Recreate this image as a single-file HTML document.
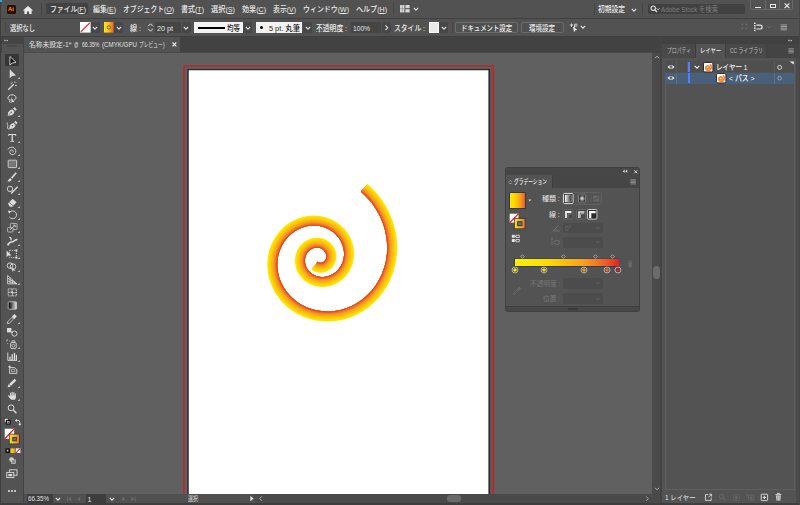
<!DOCTYPE html>
<html lang="ja"><head><meta charset="utf-8"><title>Illustrator</title>
<style>
html,body{margin:0;padding:0;background:#535353;}
body{width:800px;height:505px;position:relative;overflow:hidden;font-family:"Liberation Sans","Noto Sans CJK JP",sans-serif;}
body>div,body>span,body>svg{position:absolute;}
.t{white-space:nowrap;display:inline-block;transform-origin:0 50%;}
u{text-decoration:underline;text-underline-offset:0.5px;text-decoration-thickness:0.5px;}
</style></head><body>
<div style="left:0px;top:0px;width:800px;height:505px;background:#535353;"></div>
<div style="left:0px;top:0px;width:800px;height:18px;background:#525252;"></div>
<div style="left:0px;top:18px;width:800px;height:1px;background:#404040;"></div>
<div style="left:0px;top:19px;width:800px;height:17px;background:#525252;"></div>
<div style="left:0px;top:36px;width:800px;height:1px;background:#404040;"></div>
<div style="left:0px;top:37px;width:800px;height:16px;background:#424242;"></div>
<div style="left:24px;top:52.6px;width:628px;height:441.4px;background:#606060;"></div>
<div style="left:7px;top:5px;width:8.6px;height:8.6px;background:#2d0d00;border-radius:1.5px;"></div>
<span class="t" style="left:8.1px;top:5.4px;font-size:6px;line-height:8px;color:#ff9a00;font-weight:bold;letter-spacing:-0.3px;">Ai</span>
<svg style="left:22px;top:4.6px;" width="12" height="10" viewBox="0 0 12 10"><path d="M6 1L0.8 5.4H2.4V9H4.9V6.4H7.1V9H9.6V5.4H11.2Z" fill="#ececec"/></svg>
<div style="left:41px;top:3px;width:1px;height:12px;background:#454545;"></div>
<div style="left:46px;top:3px;width:42px;height:11px;background:#424242;border-radius:1.5px;"></div>
<span class="t m" style="transform:scaleX(0.898);left:50px;top:3.8px;font-size:7.6px;line-height:11px;color:#ececec;font-weight:500;">ファイル(<u>F</u>)</span>
<span class="t m" style="transform:scaleX(0.908);left:93px;top:3.8px;font-size:7.6px;line-height:11px;color:#ececec;font-weight:500;">編集(<u>E</u>)</span>
<span class="t m" style="transform:scaleX(0.902);left:123px;top:3.8px;font-size:7.6px;line-height:11px;color:#ececec;font-weight:500;">オブジェクト(<u>O</u>)</span>
<span class="t m" style="transform:scaleX(0.924);left:181px;top:3.8px;font-size:7.6px;line-height:11px;color:#ececec;font-weight:500;">書式(<u>T</u>)</span>
<span class="t m" style="transform:scaleX(0.948);left:211px;top:3.8px;font-size:7.6px;line-height:11px;color:#ececec;font-weight:500;">選択(<u>S</u>)</span>
<span class="t m" style="transform:scaleX(0.933);left:242px;top:3.8px;font-size:7.6px;line-height:11px;color:#ececec;font-weight:500;">効果(<u>C</u>)</span>
<span class="t m" style="transform:scaleX(0.908);left:273px;top:3.8px;font-size:7.6px;line-height:11px;color:#ececec;font-weight:500;">表示(<u>V</u>)</span>
<span class="t m" style="transform:scaleX(0.916);left:303px;top:3.8px;font-size:7.6px;line-height:11px;color:#ececec;font-weight:500;">ウィンドウ(<u>W</u>)</span>
<span class="t m" style="transform:scaleX(0.930);left:356px;top:3.8px;font-size:7.6px;line-height:11px;color:#ececec;font-weight:500;">ヘルプ(<u>H</u>)</span>
<div style="left:393px;top:3px;width:1px;height:12px;background:#454545;"></div>
<div style="left:593.5px;top:3px;width:1px;height:12px;background:#454545;"></div>
<svg style="left:400px;top:5px;" width="10" height="8" viewBox="0 0 10 8"><rect x="0" y="0" width="4.4" height="7.4" fill="#d8d8d8"/><rect x="5.4" y="0" width="4.2" height="3.2" fill="#d8d8d8"/><rect x="5.4" y="4.2" width="4.2" height="3.2" fill="#d8d8d8"/><path d="M0 3.7H4.4M2.2 0V7.4" stroke="#777" stroke-width="0.5"/></svg>
<svg style="left:411.5px;top:5.800000000000001px;" width="8" height="6" viewBox="0 0 8 6"><path d="M1.7999999999999998 1.9L4 4.1L6.2 1.9" fill="none" stroke="#e0e0e0" stroke-width="1.1"/></svg>
<span class="t m" style="transform:scaleX(0.889);left:598px;top:3.8px;font-size:7.6px;line-height:11px;color:#ececec;font-weight:500;">初期設定</span>
<svg style="left:629.5px;top:6.5px;" width="8" height="6" viewBox="0 0 8 6"><path d="M1.7999999999999998 1.9L4 4.1L6.2 1.9" fill="none" stroke="#e0e0e0" stroke-width="1.1"/></svg>
<div style="left:642px;top:3px;width:1px;height:12px;background:#454545;"></div>
<div style="left:648px;top:4px;width:97px;height:10px;background:#414141;border-radius:2px;"></div>
<svg style="left:650px;top:5px;" width="9" height="9" viewBox="0 0 9 9"><circle cx="3.2" cy="3.2" r="2.2" fill="none" stroke="#ddd" stroke-width="1.1"/><path d="M4.8 4.8L7 7" stroke="#ddd" stroke-width="1.3"/></svg>
<svg style="left:653.5px;top:5.800000000000001px;" width="8" height="6" viewBox="0 0 8 6"><path d="M2.5 2.25L4 3.75L5.5 2.25" fill="none" stroke="#ddd" stroke-width="0.9"/></svg>
<span class="t m" style="transform:scaleX(0.839);left:661px;top:3.5px;font-size:7.6px;line-height:11px;color:#7d7d7d;">Adobe Stock を検索</span>
<div style="left:750px;top:-2px;width:43px;height:12px;border:1px solid #686868;border-radius:2px;box-sizing:border-box;"></div>
<div style="left:765px;top:0px;width:1px;height:9px;background:#686868;"></div>
<div style="left:779px;top:0px;width:1px;height:9px;background:#686868;"></div>
<div style="left:755px;top:6.5px;width:6px;height:1.4px;background:#e8e8e8;"></div>
<div style="left:770px;top:3.5px;width:6px;height:4.5px;border:1.2px solid #e8e8e8;box-sizing:border-box;"></div>
<svg style="left:783px;top:2px;" width="8" height="8" viewBox="0 0 8 8"><path d="M1.6 1.4L6.4 6.2M6.4 1.4L1.6 6.2" stroke="#e8e8e8" stroke-width="1.2"/></svg>
<div style="left:5px;top:22px;width:1px;height:11px;background:#454545;"></div>
<span class="t m" style="transform:scaleX(0.823);left:10px;top:22.7px;font-size:7.6px;line-height:11px;color:#ececec;font-weight:500;">選択なし</span>
<svg style="left:80px;top:22px;" width="11" height="11" viewBox="0 0 11 11"><rect x="0" y="0" width="10.6" height="10.6" fill="#fff"/><path d="M0.8 9.8L9.8 0.8" stroke="#ee1c1c" stroke-width="1.2"/></svg>
<div style="left:91px;top:22px;width:9px;height:11px;background:#474747;border-radius:0 1.5px 1.5px 0;"></div>
<svg style="left:91.3px;top:24.5px;" width="8" height="6" viewBox="0 0 8 6"><path d="M1.7999999999999998 1.9L4 4.1L6.2 1.9" fill="none" stroke="#e0e0e0" stroke-width="1.1"/></svg>
<svg style="left:104px;top:22px;" width="11" height="11" viewBox="0 0 11 11"><defs><linearGradient id="g1" x1="0" x2="1" y1="0" y2="0"><stop offset="0" stop-color="#ffe900"/><stop offset="0.45" stop-color="#fdc70c"/><stop offset="1" stop-color="#ee5b2a"/></linearGradient></defs><rect x="0" y="0" width="9.6" height="10.6" fill="url(#g1)"/><circle cx="4.8" cy="5.3" r="1.7" fill="#f7b733" stroke="#3b5a9a" stroke-width="0.8"/></svg>
<div style="left:114px;top:22px;width:9px;height:11px;background:#474747;border-radius:0 1.5px 1.5px 0;"></div>
<svg style="left:114.8px;top:24.5px;" width="8" height="6" viewBox="0 0 8 6"><path d="M1.7999999999999998 1.9L4 4.1L6.2 1.9" fill="none" stroke="#e0e0e0" stroke-width="1.1"/></svg>
<span class="t m" style="transform:scaleX(0.930);left:130px;top:22.7px;font-size:7.6px;line-height:11px;color:#ececec;font-weight:500;">線 :</span>
<svg style="left:147px;top:22px;" width="7" height="11" viewBox="0 0 7 11"><path d="M1.2 4.2L3.5 1.8L5.8 4.2M1.2 6.8L3.5 9.2L5.8 6.8" fill="none" stroke="#e0e0e0" stroke-width="1"/></svg>
<div style="left:155px;top:22px;width:26.4px;height:11px;background:#454545;border-radius:1.5px 0 0 1.5px;"></div>
<span class="t m" style="transform:scaleX(0.947);left:157px;top:22.7px;font-size:7.6px;line-height:11px;color:#e6e6e6;font-weight:500;">20 pt</span>
<div style="left:182px;top:22px;width:9px;height:11px;background:#474747;border-radius:0 1.5px 1.5px 0;"></div>
<svg style="left:182.3px;top:24.5px;" width="8" height="6" viewBox="0 0 8 6"><path d="M1.7999999999999998 1.9L4 4.1L6.2 1.9" fill="none" stroke="#e0e0e0" stroke-width="1.1"/></svg>
<div style="left:194px;top:22px;width:49px;height:11px;background:#f2f2f2;"></div>
<div style="left:198px;top:27px;width:27px;height:1.6px;background:#000;"></div>
<span class="t m" style="transform:scaleX(0.856);left:227px;top:22.7px;font-size:7.6px;line-height:11px;color:#222;font-weight:500;">均等</span>
<div style="left:243px;top:22px;width:9px;height:11px;background:#474747;border-radius:0 1.5px 1.5px 0;"></div>
<svg style="left:243.8px;top:24.5px;" width="8" height="6" viewBox="0 0 8 6"><path d="M1.7999999999999998 1.9L4 4.1L6.2 1.9" fill="none" stroke="#e0e0e0" stroke-width="1.1"/></svg>
<div style="left:256px;top:22px;width:46px;height:11px;background:#f2f2f2;"></div>
<div style="left:259.6px;top:26px;width:3px;height:3px;background:#000;border-radius:50%;"></div>
<span class="t m" style="transform:scaleX(0.966);left:269px;top:22.7px;font-size:7.6px;line-height:11px;color:#222;font-weight:500;">5 pt. 丸筆</span>
<div style="left:303px;top:22px;width:9px;height:11px;background:#474747;border-radius:0 1.5px 1.5px 0;"></div>
<svg style="left:303.8px;top:24.5px;" width="8" height="6" viewBox="0 0 8 6"><path d="M1.7999999999999998 1.9L4 4.1L6.2 1.9" fill="none" stroke="#e0e0e0" stroke-width="1.1"/></svg>
<span class="t m" style="transform:scaleX(0.896);left:316px;top:22.7px;font-size:7.6px;line-height:11px;color:#ececec;font-weight:500;"><span style="text-decoration:underline dotted #a0a0a0;text-decoration-thickness:0.6px;text-underline-offset:0.4px">不透明度</span> :</span>
<div style="left:350.6px;top:22px;width:30.8px;height:11px;background:#454545;border-radius:1.5px 0 0 1.5px;"></div>
<span class="t m" style="transform:scaleX(0.875);left:353px;top:22.7px;font-size:7.6px;line-height:11px;color:#e6e6e6;font-weight:500;">100%</span>
<div style="left:382px;top:22px;width:9px;height:11px;background:#474747;border-radius:0 1.5px 1.5px 0;"></div>
<svg style="left:383px;top:24px;" width="7" height="8" viewBox="0 0 7 8"><path d="M2.4 1.4L4.8 3.8L2.4 6.2" fill="none" stroke="#e0e0e0" stroke-width="1.1"/></svg>
<span class="t m" style="transform:scaleX(0.896);left:394px;top:22.7px;font-size:7.6px;line-height:11px;color:#ececec;font-weight:500;">スタイル :</span>
<div style="left:429px;top:22px;width:10px;height:11px;background:#e9e9e9;border:0.6px solid #fff;box-sizing:border-box;"></div>
<div style="left:439px;top:22px;width:9px;height:11px;background:#474747;border-radius:0 1.5px 1.5px 0;"></div>
<svg style="left:439.8px;top:24.5px;" width="8" height="6" viewBox="0 0 8 6"><path d="M1.7999999999999998 1.9L4 4.1L6.2 1.9" fill="none" stroke="#e0e0e0" stroke-width="1.1"/></svg>
<div style="left:452px;top:22px;width:1px;height:11px;background:#454545;"></div>
<div style="left:455px;top:22px;width:63px;height:11px;border:1px solid #6c6c6c;border-radius:2px;box-sizing:border-box;background:#505050;"></div>
<span class="t m" style="transform:scaleX(0.840);left:461px;top:22.7px;font-size:7.6px;line-height:11px;color:#f0f0f0;font-weight:500;">ドキュメント設定</span>
<div style="left:521px;top:22px;width:43px;height:11px;border:1px solid #6c6c6c;border-radius:2px;box-sizing:border-box;background:#505050;"></div>
<span class="t m" style="transform:scaleX(0.856);left:529px;top:22.7px;font-size:7.6px;line-height:11px;color:#f0f0f0;font-weight:500;">環境設定</span>
<svg style="left:569px;top:22px;" width="10" height="11" viewBox="0 0 10 11"><path d="M1 3H4M2.5 1.5V5M5.5 2.2H8.5M5.5 4H8.5M5.5 2.2V8.8" stroke="#ddd" stroke-width="0.9" fill="none"/><path d="M4 4.5L8.5 8L6.3 8.2L5 10.2Z" fill="#e8e8e8"/></svg>
<svg style="left:579.2px;top:24px;" width="8" height="6" viewBox="0 0 8 6"><path d="M1.7999999999999998 1.9L4 4.1L6.2 1.9" fill="none" stroke="#e0e0e0" stroke-width="1.1"/></svg>
<svg style="left:741px;top:23px;" width="8" height="8" viewBox="0 0 8 8"><g fill="#6e6e6e"><rect x="0.6" y="0.6" width="1.6" height="1.6"/><rect x="4.6" y="0.6" width="1.6" height="1.6"/><rect x="0.6" y="4.6" width="1.6" height="1.6"/><rect x="4.6" y="4.6" width="1.6" height="1.6"/></g></svg>
<svg style="left:753px;top:22px;" width="12" height="11" viewBox="0 0 12 11"><g fill="#e6e6e6"><rect x="1" y="0.6" width="1.6" height="1.4"/><rect x="1" y="3" width="1.6" height="1.4"/><rect x="1" y="5.4" width="1.6" height="1.4"/><rect x="1" y="7.8" width="1.6" height="1.4"/></g><path d="M3.4 3.2H7.2A1.9 1.9 0 0 1 7.2 7H3.4" fill="none" stroke="#e6e6e6" stroke-width="1.2"/></svg>
<svg style="left:764.7px;top:24px;" width="8" height="6" viewBox="0 0 8 6"><path d="M2.2 2.1L4 3.9L5.8 2.1" fill="none" stroke="#777" stroke-width="0.8"/></svg>
<svg style="left:780px;top:24px;" width="8" height="7" viewBox="0 0 8 7"><g fill="#9a9a9a"><rect x="0.6" y="0.4" width="6.4" height="1.1"/><rect x="0.6" y="2" width="6.4" height="1.1"/><rect x="0.6" y="3.6" width="6.4" height="1.1"/><rect x="0.6" y="5.2" width="6.4" height="1.1"/></g></svg>
<div style="left:2px;top:37px;width:22px;height:6.5px;background:#454545;"></div>
<svg style="left:4.2px;top:38.6px;" width="6" height="4" viewBox="0 0 6 4"><path d="M0.5 0.5L1.9 1.5L0.5 2.5ZM2.7 0.5L4.1 1.5L2.7 2.5Z" fill="#e8e8e8"/></svg>
<div style="left:2px;top:43.5px;width:21.5px;height:460px;background:#535353;"></div>
<div style="left:6.6px;top:45.2px;width:10.4px;height:1.6px;background:#474747;"></div>
<div style="left:22.8px;top:37px;width:1.7px;height:467px;background:#444444;"></div>
<div style="left:24.4px;top:37px;width:156px;height:14.6px;background:#535353;"></div>
<div style="left:24.4px;top:51.6px;width:628px;height:1px;background:#4a4a4a;"></div>
<span class="t m" style="transform:scaleX(1.024);left:28.6px;top:38.6px;font-size:6.6px;line-height:11px;color:#e0e0e0;">名称未設定-1*</span>
<span class="t m" style="transform:scaleX(0.656);left:74.2px;top:38.6px;font-size:6.6px;line-height:11px;color:#e0e0e0;">@</span>
<span class="t m" style="transform:scaleX(0.778);left:81.6px;top:38.6px;font-size:6.6px;line-height:11px;color:#e0e0e0;">66.35%</span>
<span class="t m" style="transform:scaleX(0.936);left:101.8px;top:38.6px;font-size:6.6px;line-height:11px;color:#e0e0e0;">(CMYK/GPU</span>
<span class="t m" style="transform:scaleX(0.725);left:139px;top:38.6px;font-size:6.6px;line-height:11px;color:#e0e0e0;">プレビュー)</span>
<svg style="left:171px;top:41px;" width="7" height="7" viewBox="0 0 7 7"><path d="M1.5 1.5L5.3 5.3M5.3 1.5L1.5 5.3" stroke="#e8e8e8" stroke-width="1.2"/></svg>
<svg style="left:0;top:0;" width="800" height="505" viewBox="0 0 800 505"><rect x="183" y="65.15" width="311.1" height="1.7" fill="#ad2f2f"/><rect x="183" y="65.15" width="2" height="429" fill="#ad2f2f"/><rect x="491.9" y="65.15" width="2.2" height="429" fill="#ad2f2f"/><rect x="187.25" y="68.9" width="302.9" height="426" fill="#2b2b2b"/><rect x="188.75" y="70.25" width="299.65" height="425" fill="#ffffff"/></svg>
<svg style="left:0;top:0;" width="800" height="505" viewBox="0 0 800 505"><polygon points="311.29,269.58 312.49,270.45 313.78,271.20 315.15,271.82 316.60,272.30 318.10,272.62 319.65,272.79 321.21,272.80 322.79,272.64 324.36,272.31 325.90,271.82 327.39,271.17 328.82,270.35 330.17,269.38 331.43,268.26 332.58,267.00 333.59,265.62 334.47,264.12 335.19,262.52 335.75,260.84 336.14,259.09 336.34,257.29 336.35,255.46 336.17,253.62 335.80,251.79 335.23,249.99 334.46,248.24 333.51,246.57 332.38,244.98 331.07,243.50 329.60,242.15 327.98,240.96 326.22,239.92 324.35,239.07 322.37,238.40 320.32,237.95 318.20,237.70 316.04,237.68 313.87,237.89 311.71,238.32 309.59,238.99 307.52,239.89 305.53,241.01 303.65,242.34 301.90,243.89 300.30,245.62 298.87,247.54 297.64,249.62 296.62,251.84 295.83,254.18 295.28,256.62 294.98,259.14 294.95,261.70 295.19,264.28 295.70,266.86 296.49,269.39 297.55,271.86 298.88,274.24 300.46,276.48 302.30,278.58 304.37,280.50 306.65,282.21 309.14,283.69 311.79,284.91 314.59,285.87 317.51,286.53 320.53,286.90 323.60,286.94 326.69,286.67 329.78,286.06 332.83,285.12 335.80,283.86 338.66,282.27 341.36,280.37 343.89,278.16 346.20,275.68 348.27,272.94 350.06,269.95 351.55,266.76 352.71,263.38 353.52,259.86 353.97,256.23 354.03,252.52 353.71,248.78 352.99,245.05 351.86,241.36 350.34,237.77 348.43,234.31 346.14,231.02 343.48,227.96 340.48,225.15 337.16,222.64 333.55,220.46 329.68,218.64 325.59,217.22 321.32,216.22 316.91,215.67 312.41,215.58 307.87,215.96 303.32,216.83 298.84,218.18 294.47,220.02 290.25,222.33 286.25,225.11 282.51,228.34 279.08,231.98 276.01,236.02 273.34,240.41 271.11,245.12 269.37,250.10 268.14,255.31 267.45,260.69 267.32,266.18 267.77,271.73 268.81,277.28 270.45,282.76 272.68,288.11 275.50,293.27 278.88,298.18 282.82,302.77 287.26,306.97 292.19,310.74 297.56,314.03 303.32,316.77 309.42,318.92 315.79,320.44 322.38,321.31 329.11,321.48 335.92,320.95 342.73,319.69 349.46,317.69 356.04,314.97 362.38,311.53 368.41,307.39 374.05,302.58 379.24,297.13 383.89,291.09 387.94,284.51 391.32,277.44 393.99,269.95 395.89,262.12 396.97,254.02 397.21,245.73 396.57,237.35 395.04,228.97 392.61,220.68 389.28,212.57 385.07,204.75 379.99,197.31 374.08,190.34 367.39,183.93 360.86,191.51 366.80,197.19 372.04,203.37 376.53,209.95 380.24,216.85 383.18,223.99 385.31,231.28 386.65,238.63 387.21,245.97 387.01,253.21 386.06,260.27 384.41,267.09 382.09,273.59 379.16,279.72 375.65,285.41 371.64,290.63 367.18,295.32 362.33,299.46 357.16,303.00 351.74,305.94 346.13,308.27 340.40,309.96 334.62,311.03 328.85,311.49 323.16,311.34 317.61,310.61 312.25,309.33 307.14,307.52 302.32,305.23 297.85,302.50 293.75,299.36 290.06,295.87 286.81,292.08 284.02,288.03 281.70,283.79 279.87,279.40 278.53,274.92 277.68,270.40 277.31,265.89 277.42,261.44 277.97,257.10 278.97,252.91 280.36,248.91 282.14,245.15 284.27,241.65 286.71,238.44 289.42,235.56 292.37,233.02 295.51,230.84 298.81,229.02 302.23,227.59 305.71,226.54 309.22,225.87 312.73,225.57 316.18,225.64 319.56,226.07 322.81,226.83 325.91,227.90 328.83,229.28 331.55,230.92 334.04,232.80 336.27,234.89 338.25,237.17 339.94,239.59 341.35,242.14 342.46,244.77 343.28,247.46 343.80,250.16 344.04,252.86 343.99,255.53 343.67,258.12 343.10,260.63 342.27,263.01 341.23,265.26 339.97,267.35 338.54,269.26 336.94,270.98 335.20,272.49 333.35,273.79 331.40,274.87 329.40,275.73 327.35,276.36 325.28,276.77 323.23,276.95 321.20,276.92 319.23,276.68 317.32,276.25 315.51,275.63 313.80,274.84 312.22,273.90 310.77,272.81 309.47,271.61 308.32,270.30 307.34,268.90 306.52,267.44 305.87,265.93 305.39,264.39 305.08,262.85 304.94,261.30 304.96,259.79 305.13,258.31 305.45,256.89 305.91,255.53 306.49,254.26 307.19,253.08 308.00,252.00 308.89,251.04 309.85,250.18 310.88,249.45 311.96,248.85 313.07,248.36 314.20,248.01 315.34,247.78 316.47,247.67 317.58,247.68 318.66,247.81 319.69,248.04 320.68,248.37 321.60,248.79 322.46,249.29 323.24,249.87 323.94,250.51 324.55,251.21 325.08,251.94 325.52,252.71 325.86,253.51 326.12,254.31 326.28,255.12 326.36,255.92 326.36,256.70 326.27,257.46 326.11,258.19 325.88,258.88 325.59,259.52 325.24,260.12 324.84,260.66 324.40,261.15 323.93,261.57 323.42,261.93 322.90,262.23 322.36,262.47 321.82,262.64 321.27,262.76 320.74,262.81 320.21,262.81 319.71,262.75 319.23,262.65 318.77,262.50 318.35,262.31 317.96,262.08 317.61,261.83" fill="rgb(255, 231, 0)"/><polygon points="311.74,269.02 312.88,269.85 314.10,270.57 315.41,271.16 316.79,271.61 318.22,271.92 319.69,272.08 321.18,272.08 322.68,271.93 324.17,271.62 325.64,271.15 327.07,270.53 328.44,269.75 329.73,268.82 330.93,267.75 332.02,266.55 333.00,265.23 333.84,263.79 334.53,262.26 335.06,260.65 335.43,258.98 335.63,257.25 335.64,255.50 335.47,253.73 335.11,251.97 334.56,250.24 333.82,248.56 332.91,246.95 331.82,245.42 330.56,244.00 329.15,242.71 327.59,241.55 325.89,240.55 324.09,239.73 322.18,239.09 320.20,238.65 318.15,238.42 316.07,238.40 313.98,238.59 311.89,239.02 309.83,239.66 307.83,240.53 305.91,241.61 304.09,242.90 302.40,244.40 300.85,246.08 299.47,247.93 298.27,249.95 297.28,252.10 296.51,254.38 295.98,256.74 295.69,259.19 295.66,261.67 295.89,264.18 296.39,266.68 297.16,269.15 298.19,271.55 299.48,273.85 301.03,276.04 302.81,278.08 304.83,279.95 307.05,281.61 309.47,283.05 312.06,284.25 314.79,285.18 317.64,285.83 320.57,286.18 323.57,286.23 326.59,285.96 329.61,285.37 332.59,284.45 335.49,283.21 338.28,281.66 340.92,279.80 343.39,277.65 345.65,275.22 347.68,272.54 349.43,269.62 350.88,266.49 352.02,263.19 352.82,259.74 353.26,256.18 353.32,252.55 353.00,248.88 352.29,245.22 351.19,241.60 349.70,238.08 347.82,234.68 345.57,231.46 342.97,228.45 340.02,225.70 336.76,223.23 333.21,221.09 329.41,219.30 325.39,217.91 321.20,216.93 316.86,216.38 312.43,216.29 307.96,216.67 303.50,217.52 299.08,218.85 294.78,220.66 290.63,222.94 286.68,225.68 283.00,228.85 279.62,232.44 276.60,236.42 273.97,240.75 271.77,245.39 270.05,250.30 268.84,255.44 268.16,260.74 268.03,266.16 268.48,271.64 269.51,277.11 271.13,282.52 273.33,287.81 276.11,292.90 279.45,297.74 283.33,302.27 287.73,306.43 292.60,310.16 297.90,313.40 303.59,316.11 309.62,318.23 315.92,319.74 322.43,320.60 329.09,320.77 335.83,320.24 342.56,318.99 349.22,317.02 355.73,314.33 362.01,310.92 367.98,306.83 373.56,302.06 378.70,296.67 383.30,290.69 387.31,284.16 390.66,277.16 393.31,269.74 395.19,261.98 396.26,253.96 396.50,245.75 395.86,237.44 394.35,229.14 391.94,220.92 388.64,212.88 384.46,205.12 379.43,197.74 373.56,190.83 366.92,184.48 360.86,191.51 366.80,197.19 372.04,203.37 376.53,209.95 380.24,216.85 383.18,223.99 385.31,231.28 386.65,238.63 387.21,245.97 387.01,253.21 386.06,260.27 384.41,267.09 382.09,273.59 379.16,279.72 375.65,285.41 371.64,290.63 367.18,295.32 362.33,299.46 357.16,303.00 351.74,305.94 346.13,308.27 340.40,309.96 334.62,311.03 328.85,311.49 323.16,311.34 317.61,310.61 312.25,309.33 307.14,307.52 302.32,305.23 297.85,302.50 293.75,299.36 290.06,295.87 286.81,292.08 284.02,288.03 281.70,283.79 279.87,279.40 278.53,274.92 277.68,270.40 277.31,265.89 277.42,261.44 277.97,257.10 278.97,252.91 280.36,248.91 282.14,245.15 284.27,241.65 286.71,238.44 289.42,235.56 292.37,233.02 295.51,230.84 298.81,229.02 302.23,227.59 305.71,226.54 309.22,225.87 312.73,225.57 316.18,225.64 319.56,226.07 322.81,226.83 325.91,227.90 328.83,229.28 331.55,230.92 334.04,232.80 336.27,234.89 338.25,237.17 339.94,239.59 341.35,242.14 342.46,244.77 343.28,247.46 343.80,250.16 344.04,252.86 343.99,255.53 343.67,258.12 343.10,260.63 342.27,263.01 341.23,265.26 339.97,267.35 338.54,269.26 336.94,270.98 335.20,272.49 333.35,273.79 331.40,274.87 329.40,275.73 327.35,276.36 325.28,276.77 323.23,276.95 321.20,276.92 319.23,276.68 317.32,276.25 315.51,275.63 313.80,274.84 312.22,273.90 310.77,272.81 309.47,271.61 308.32,270.30 307.34,268.90 306.52,267.44 305.87,265.93 305.39,264.39 305.08,262.85 304.94,261.30 304.96,259.79 305.13,258.31 305.45,256.89 305.91,255.53 306.49,254.26 307.19,253.08 308.00,252.00 308.89,251.04 309.85,250.18 310.88,249.45 311.96,248.85 313.07,248.36 314.20,248.01 315.34,247.78 316.47,247.67 317.58,247.68 318.66,247.81 319.69,248.04 320.68,248.37 321.60,248.79 322.46,249.29 323.24,249.87 323.94,250.51 324.55,251.21 325.08,251.94 325.52,252.71 325.86,253.51 326.12,254.31 326.28,255.12 326.36,255.92 326.36,256.70 326.27,257.46 326.11,258.19 325.88,258.88 325.59,259.52 325.24,260.12 324.84,260.66 324.40,261.15 323.93,261.57 323.42,261.93 322.90,262.23 322.36,262.47 321.82,262.64 321.27,262.76 320.74,262.81 320.21,262.81 319.71,262.75 319.23,262.65 318.77,262.50 318.35,262.31 317.96,262.08 317.61,261.83" fill="rgb(254, 224, 0)"/><polygon points="312.20,268.47 313.27,269.26 314.43,269.93 315.67,270.49 316.97,270.92 318.33,271.21 319.73,271.37 321.15,271.37 322.57,271.23 323.99,270.93 325.39,270.49 326.75,269.89 328.05,269.15 329.28,268.26 330.43,267.24 331.47,266.10 332.40,264.83 333.20,263.46 333.86,262.00 334.38,260.46 334.73,258.86 334.91,257.21 334.92,255.53 334.76,253.84 334.41,252.15 333.89,250.50 333.19,248.88 332.31,247.33 331.26,245.87 330.05,244.50 328.69,243.26 327.19,242.15 325.56,241.19 323.82,240.39 321.99,239.78 320.08,239.35 318.11,239.13 316.10,239.11 314.08,239.30 312.07,239.71 310.08,240.33 308.15,241.17 306.29,242.21 304.53,243.46 302.89,244.91 301.40,246.53 300.06,248.33 298.90,250.28 297.95,252.37 297.20,254.57 296.68,256.86 296.41,259.23 296.38,261.64 296.60,264.08 297.08,266.51 297.83,268.90 298.83,271.23 300.08,273.47 301.59,275.60 303.32,277.58 305.28,279.40 307.45,281.02 309.80,282.42 312.32,283.59 314.98,284.49 317.76,285.13 320.62,285.47 323.54,285.52 326.49,285.25 329.44,284.67 332.34,283.78 335.17,282.57 337.90,281.06 340.48,279.24 342.90,277.14 345.11,274.76 347.08,272.14 348.80,269.28 350.22,266.22 351.33,262.99 352.11,259.61 352.54,256.13 352.61,252.57 352.29,248.98 351.60,245.39 350.52,241.85 349.06,238.39 347.22,235.06 345.01,231.90 342.45,228.95 339.56,226.24 336.36,223.82 332.88,221.72 329.14,219.97 325.19,218.59 321.07,217.63 316.81,217.10 312.46,217.01 308.06,217.38 303.67,218.22 299.32,219.53 295.09,221.31 291.00,223.55 287.12,226.24 283.49,229.37 280.17,232.90 277.19,236.82 274.59,241.09 272.43,245.66 270.74,250.50 269.54,255.56 268.87,260.79 268.75,266.14 269.19,271.54 270.20,276.94 271.80,282.28 273.97,287.50 276.72,292.53 280.02,297.31 283.85,301.78 288.19,305.89 293.00,309.57 298.24,312.77 303.87,315.45 309.82,317.55 316.05,319.04 322.49,319.88 329.08,320.05 335.73,319.53 342.40,318.30 348.98,316.35 355.42,313.68 361.63,310.32 367.54,306.26 373.07,301.55 378.15,296.21 382.71,290.28 386.68,283.82 390.00,276.89 392.62,269.54 394.48,261.85 395.55,253.90 395.78,245.77 395.16,237.54 393.65,229.30 391.26,221.15 387.99,213.18 383.85,205.49 378.86,198.17 373.04,191.32 366.46,185.02 360.86,191.51 366.80,197.19 372.04,203.37 376.53,209.95 380.24,216.85 383.18,223.99 385.31,231.28 386.65,238.63 387.21,245.97 387.01,253.21 386.06,260.27 384.41,267.09 382.09,273.59 379.16,279.72 375.65,285.41 371.64,290.63 367.18,295.32 362.33,299.46 357.16,303.00 351.74,305.94 346.13,308.27 340.40,309.96 334.62,311.03 328.85,311.49 323.16,311.34 317.61,310.61 312.25,309.33 307.14,307.52 302.32,305.23 297.85,302.50 293.75,299.36 290.06,295.87 286.81,292.08 284.02,288.03 281.70,283.79 279.87,279.40 278.53,274.92 277.68,270.40 277.31,265.89 277.42,261.44 277.97,257.10 278.97,252.91 280.36,248.91 282.14,245.15 284.27,241.65 286.71,238.44 289.42,235.56 292.37,233.02 295.51,230.84 298.81,229.02 302.23,227.59 305.71,226.54 309.22,225.87 312.73,225.57 316.18,225.64 319.56,226.07 322.81,226.83 325.91,227.90 328.83,229.28 331.55,230.92 334.04,232.80 336.27,234.89 338.25,237.17 339.94,239.59 341.35,242.14 342.46,244.77 343.28,247.46 343.80,250.16 344.04,252.86 343.99,255.53 343.67,258.12 343.10,260.63 342.27,263.01 341.23,265.26 339.97,267.35 338.54,269.26 336.94,270.98 335.20,272.49 333.35,273.79 331.40,274.87 329.40,275.73 327.35,276.36 325.28,276.77 323.23,276.95 321.20,276.92 319.23,276.68 317.32,276.25 315.51,275.63 313.80,274.84 312.22,273.90 310.77,272.81 309.47,271.61 308.32,270.30 307.34,268.90 306.52,267.44 305.87,265.93 305.39,264.39 305.08,262.85 304.94,261.30 304.96,259.79 305.13,258.31 305.45,256.89 305.91,255.53 306.49,254.26 307.19,253.08 308.00,252.00 308.89,251.04 309.85,250.18 310.88,249.45 311.96,248.85 313.07,248.36 314.20,248.01 315.34,247.78 316.47,247.67 317.58,247.68 318.66,247.81 319.69,248.04 320.68,248.37 321.60,248.79 322.46,249.29 323.24,249.87 323.94,250.51 324.55,251.21 325.08,251.94 325.52,252.71 325.86,253.51 326.12,254.31 326.28,255.12 326.36,255.92 326.36,256.70 326.27,257.46 326.11,258.19 325.88,258.88 325.59,259.52 325.24,260.12 324.84,260.66 324.40,261.15 323.93,261.57 323.42,261.93 322.90,262.23 322.36,262.47 321.82,262.64 321.27,262.76 320.74,262.81 320.21,262.81 319.71,262.75 319.23,262.65 318.77,262.50 318.35,262.31 317.96,262.08 317.61,261.83" fill="rgb(254, 218, 0)"/><polygon points="312.65,267.92 313.66,268.66 314.76,269.30 315.93,269.82 317.16,270.23 318.45,270.51 319.77,270.65 321.11,270.66 322.46,270.52 323.81,270.24 325.14,269.82 326.43,269.25 327.66,268.55 328.84,267.71 329.92,266.74 330.92,265.64 331.80,264.44 332.57,263.14 333.20,261.74 333.69,260.27 334.02,258.74 334.20,257.17 334.21,255.56 334.05,253.94 333.72,252.33 333.22,250.75 332.55,249.20 331.71,247.72 330.70,246.31 329.54,245.00 328.24,243.81 326.80,242.74 325.23,241.82 323.56,241.06 321.80,240.47 319.96,240.06 318.07,239.84 316.13,239.82 314.19,240.01 312.25,240.40 310.33,241.00 308.47,241.81 306.68,242.82 304.98,244.02 303.39,245.42 301.95,246.99 300.65,248.73 299.54,250.61 298.61,252.63 297.89,254.76 297.39,256.99 297.12,259.28 297.09,261.62 297.31,263.98 297.78,266.33 298.50,268.65 299.47,270.91 300.69,273.09 302.15,275.16 303.84,277.09 305.74,278.85 307.85,280.42 310.14,281.79 312.59,282.92 315.18,283.81 317.88,284.42 320.67,284.76 323.52,284.80 326.39,284.54 329.26,283.98 332.09,283.11 334.86,281.93 337.52,280.45 340.04,278.68 342.40,276.62 344.56,274.30 346.49,271.74 348.17,268.95 349.56,265.96 350.65,262.79 351.41,259.49 351.83,256.08 351.89,252.59 351.59,249.08 350.91,245.56 349.85,242.09 348.41,238.70 346.61,235.44 344.45,232.34 341.94,229.44 339.10,226.79 335.96,224.41 332.54,222.35 328.87,220.63 325.00,219.28 320.94,218.33 316.76,217.81 312.48,217.72 308.16,218.08 303.84,218.91 299.57,220.20 295.40,221.95 291.38,224.16 287.56,226.81 283.99,229.88 280.71,233.37 277.78,237.22 275.22,241.43 273.09,245.93 271.42,250.70 270.24,255.69 269.58,260.85 269.46,266.12 269.89,271.45 270.90,276.77 272.47,282.04 274.62,287.19 277.32,292.15 280.58,296.87 284.37,301.29 288.65,305.34 293.40,308.98 298.58,312.14 304.14,314.78 310.02,316.86 316.18,318.34 322.55,319.17 329.06,319.34 335.64,318.82 342.23,317.60 348.74,315.67 355.11,313.04 361.26,309.71 367.11,305.69 372.58,301.03 377.61,295.74 382.12,289.88 386.06,283.48 389.35,276.61 391.94,269.34 393.78,261.72 394.84,253.84 395.07,245.78 394.45,237.63 392.96,229.47 390.59,221.39 387.35,213.49 383.24,205.86 378.29,198.61 372.52,191.81 365.99,185.56 360.86,191.51 366.80,197.19 372.04,203.37 376.53,209.95 380.24,216.85 383.18,223.99 385.31,231.28 386.65,238.63 387.21,245.97 387.01,253.21 386.06,260.27 384.41,267.09 382.09,273.59 379.16,279.72 375.65,285.41 371.64,290.63 367.18,295.32 362.33,299.46 357.16,303.00 351.74,305.94 346.13,308.27 340.40,309.96 334.62,311.03 328.85,311.49 323.16,311.34 317.61,310.61 312.25,309.33 307.14,307.52 302.32,305.23 297.85,302.50 293.75,299.36 290.06,295.87 286.81,292.08 284.02,288.03 281.70,283.79 279.87,279.40 278.53,274.92 277.68,270.40 277.31,265.89 277.42,261.44 277.97,257.10 278.97,252.91 280.36,248.91 282.14,245.15 284.27,241.65 286.71,238.44 289.42,235.56 292.37,233.02 295.51,230.84 298.81,229.02 302.23,227.59 305.71,226.54 309.22,225.87 312.73,225.57 316.18,225.64 319.56,226.07 322.81,226.83 325.91,227.90 328.83,229.28 331.55,230.92 334.04,232.80 336.27,234.89 338.25,237.17 339.94,239.59 341.35,242.14 342.46,244.77 343.28,247.46 343.80,250.16 344.04,252.86 343.99,255.53 343.67,258.12 343.10,260.63 342.27,263.01 341.23,265.26 339.97,267.35 338.54,269.26 336.94,270.98 335.20,272.49 333.35,273.79 331.40,274.87 329.40,275.73 327.35,276.36 325.28,276.77 323.23,276.95 321.20,276.92 319.23,276.68 317.32,276.25 315.51,275.63 313.80,274.84 312.22,273.90 310.77,272.81 309.47,271.61 308.32,270.30 307.34,268.90 306.52,267.44 305.87,265.93 305.39,264.39 305.08,262.85 304.94,261.30 304.96,259.79 305.13,258.31 305.45,256.89 305.91,255.53 306.49,254.26 307.19,253.08 308.00,252.00 308.89,251.04 309.85,250.18 310.88,249.45 311.96,248.85 313.07,248.36 314.20,248.01 315.34,247.78 316.47,247.67 317.58,247.68 318.66,247.81 319.69,248.04 320.68,248.37 321.60,248.79 322.46,249.29 323.24,249.87 323.94,250.51 324.55,251.21 325.08,251.94 325.52,252.71 325.86,253.51 326.12,254.31 326.28,255.12 326.36,255.92 326.36,256.70 326.27,257.46 326.11,258.19 325.88,258.88 325.59,259.52 325.24,260.12 324.84,260.66 324.40,261.15 323.93,261.57 323.42,261.93 322.90,262.23 322.36,262.47 321.82,262.64 321.27,262.76 320.74,262.81 320.21,262.81 319.71,262.75 319.23,262.65 318.77,262.50 318.35,262.31 317.96,262.08 317.61,261.83" fill="rgb(253, 212, 0)"/><polygon points="313.10,267.36 314.05,268.06 315.08,268.66 316.19,269.16 317.35,269.54 318.56,269.80 319.81,269.94 321.08,269.94 322.36,269.82 323.63,269.55 324.88,269.15 326.11,268.61 327.28,267.95 328.39,267.15 329.42,266.23 330.37,265.19 331.21,264.05 331.93,262.81 332.53,261.48 333.00,260.08 333.32,258.63 333.49,257.12 333.50,255.59 333.35,254.05 333.03,252.51 332.55,251.00 331.91,249.52 331.10,248.10 330.14,246.76 329.03,245.50 327.78,244.36 326.40,243.34 324.90,242.45 323.30,241.72 321.61,241.16 319.84,240.76 318.02,240.55 316.16,240.54 314.29,240.71 312.42,241.09 310.58,241.67 308.79,242.45 307.06,243.42 305.42,244.58 303.89,245.93 302.50,247.45 301.25,249.12 300.17,250.94 299.27,252.89 298.58,254.96 298.09,257.11 297.83,259.32 297.80,261.59 298.01,263.87 298.47,266.15 299.17,268.40 300.11,270.60 301.29,272.71 302.71,274.72 304.35,276.59 306.20,278.30 308.24,279.83 310.47,281.16 312.85,282.26 315.37,283.12 318.00,283.72 320.72,284.05 323.49,284.09 326.29,283.84 329.09,283.29 331.85,282.44 334.54,281.29 337.14,279.85 339.60,278.12 341.90,276.11 344.01,273.85 345.90,271.34 347.54,268.61 348.90,265.69 349.96,262.60 350.71,259.36 351.12,256.03 351.18,252.62 350.88,249.18 350.21,245.73 349.18,242.33 347.77,239.02 346.00,235.82 343.88,232.78 341.42,229.94 338.64,227.33 335.56,225.00 332.20,222.98 328.60,221.29 324.80,219.97 320.82,219.04 316.70,218.52 312.50,218.43 308.25,218.79 304.01,219.60 299.81,220.87 295.71,222.59 291.75,224.76 288.00,227.37 284.48,230.40 281.26,233.83 278.37,237.63 275.85,241.76 273.76,246.20 272.11,250.90 270.95,255.82 270.29,260.90 270.17,266.10 270.60,271.35 271.59,276.60 273.14,281.80 275.26,286.88 277.93,291.78 281.15,296.44 284.88,300.80 289.12,304.80 293.81,308.39 298.92,311.51 304.41,314.12 310.23,316.18 316.31,317.63 322.60,318.46 329.04,318.63 335.55,318.11 342.06,316.91 348.51,315.00 354.81,312.39 360.89,309.10 366.67,305.13 372.09,300.51 377.07,295.28 381.54,289.47 385.43,283.14 388.69,276.34 391.25,269.13 393.08,261.59 394.13,253.78 394.35,245.80 393.74,237.72 392.26,229.63 389.92,221.62 386.70,213.80 382.63,206.24 377.72,199.04 372.00,192.30 365.52,186.10 360.86,191.51 366.80,197.19 372.04,203.37 376.53,209.95 380.24,216.85 383.18,223.99 385.31,231.28 386.65,238.63 387.21,245.97 387.01,253.21 386.06,260.27 384.41,267.09 382.09,273.59 379.16,279.72 375.65,285.41 371.64,290.63 367.18,295.32 362.33,299.46 357.16,303.00 351.74,305.94 346.13,308.27 340.40,309.96 334.62,311.03 328.85,311.49 323.16,311.34 317.61,310.61 312.25,309.33 307.14,307.52 302.32,305.23 297.85,302.50 293.75,299.36 290.06,295.87 286.81,292.08 284.02,288.03 281.70,283.79 279.87,279.40 278.53,274.92 277.68,270.40 277.31,265.89 277.42,261.44 277.97,257.10 278.97,252.91 280.36,248.91 282.14,245.15 284.27,241.65 286.71,238.44 289.42,235.56 292.37,233.02 295.51,230.84 298.81,229.02 302.23,227.59 305.71,226.54 309.22,225.87 312.73,225.57 316.18,225.64 319.56,226.07 322.81,226.83 325.91,227.90 328.83,229.28 331.55,230.92 334.04,232.80 336.27,234.89 338.25,237.17 339.94,239.59 341.35,242.14 342.46,244.77 343.28,247.46 343.80,250.16 344.04,252.86 343.99,255.53 343.67,258.12 343.10,260.63 342.27,263.01 341.23,265.26 339.97,267.35 338.54,269.26 336.94,270.98 335.20,272.49 333.35,273.79 331.40,274.87 329.40,275.73 327.35,276.36 325.28,276.77 323.23,276.95 321.20,276.92 319.23,276.68 317.32,276.25 315.51,275.63 313.80,274.84 312.22,273.90 310.77,272.81 309.47,271.61 308.32,270.30 307.34,268.90 306.52,267.44 305.87,265.93 305.39,264.39 305.08,262.85 304.94,261.30 304.96,259.79 305.13,258.31 305.45,256.89 305.91,255.53 306.49,254.26 307.19,253.08 308.00,252.00 308.89,251.04 309.85,250.18 310.88,249.45 311.96,248.85 313.07,248.36 314.20,248.01 315.34,247.78 316.47,247.67 317.58,247.68 318.66,247.81 319.69,248.04 320.68,248.37 321.60,248.79 322.46,249.29 323.24,249.87 323.94,250.51 324.55,251.21 325.08,251.94 325.52,252.71 325.86,253.51 326.12,254.31 326.28,255.12 326.36,255.92 326.36,256.70 326.27,257.46 326.11,258.19 325.88,258.88 325.59,259.52 325.24,260.12 324.84,260.66 324.40,261.15 323.93,261.57 323.42,261.93 322.90,262.23 322.36,262.47 321.82,262.64 321.27,262.76 320.74,262.81 320.21,262.81 319.71,262.75 319.23,262.65 318.77,262.50 318.35,262.31 317.96,262.08 317.61,261.83" fill="rgb(252, 203, 4)"/><polygon points="313.55,266.81 314.44,267.46 315.41,268.03 316.45,268.49 317.54,268.85 318.68,269.10 319.85,269.23 321.04,269.23 322.25,269.11 323.45,268.86 324.63,268.48 325.78,267.98 326.89,267.34 327.94,266.59 328.92,265.72 329.81,264.74 330.61,263.66 331.30,262.48 331.87,261.22 332.31,259.89 332.61,258.51 332.77,257.08 332.78,255.63 332.64,254.16 332.34,252.69 331.88,251.25 331.27,249.84 330.50,248.49 329.58,247.20 328.52,246.00 327.33,244.91 326.01,243.93 324.57,243.09 323.04,242.39 321.42,241.84 319.72,241.47 317.98,241.27 316.19,241.25 314.40,241.42 312.60,241.78 310.83,242.34 309.10,243.09 307.44,244.02 305.86,245.14 304.39,246.44 303.05,247.90 301.84,249.52 300.80,251.28 299.94,253.16 299.26,255.15 298.80,257.23 298.54,259.37 298.52,261.56 298.72,263.77 299.16,265.98 299.84,268.16 300.75,270.28 301.90,272.33 303.27,274.27 304.86,276.09 306.66,277.75 308.64,279.24 310.80,280.53 313.12,281.60 315.57,282.43 318.13,283.02 320.77,283.33 323.47,283.37 326.19,283.13 328.91,282.60 331.60,281.77 334.23,280.65 336.76,279.24 339.16,277.55 341.41,275.60 343.46,273.39 345.31,270.94 346.90,268.28 348.24,265.42 349.27,262.40 350.00,259.24 350.41,255.98 350.46,252.64 350.17,249.27 349.52,245.91 348.50,242.58 347.13,239.33 345.40,236.19 343.32,233.22 340.91,230.43 338.18,227.88 335.16,225.59 331.87,223.61 328.34,221.95 324.60,220.65 320.69,219.74 316.65,219.23 312.52,219.15 308.35,219.50 304.18,220.30 300.05,221.54 296.02,223.24 292.13,225.37 288.43,227.94 284.97,230.92 281.80,234.29 278.96,238.03 276.48,242.10 274.42,246.47 272.80,251.10 271.65,255.95 271.01,260.95 270.89,266.08 271.31,271.26 272.28,276.44 273.82,281.56 275.90,286.57 278.54,291.40 281.71,296.00 285.40,300.30 289.58,304.25 294.21,307.80 299.26,310.89 304.68,313.46 310.43,315.49 316.44,316.93 322.66,317.75 329.02,317.91 335.46,317.41 341.90,316.21 348.27,314.33 354.50,311.75 360.51,308.49 366.24,304.56 371.60,299.99 376.53,294.81 380.95,289.06 384.80,282.80 388.03,276.06 390.57,268.93 392.38,261.46 393.41,253.73 393.64,245.82 393.03,237.81 391.57,229.79 389.24,221.86 386.06,214.10 382.02,206.61 377.15,199.47 371.48,192.79 365.06,186.64 360.86,191.51 366.80,197.19 372.04,203.37 376.53,209.95 380.24,216.85 383.18,223.99 385.31,231.28 386.65,238.63 387.21,245.97 387.01,253.21 386.06,260.27 384.41,267.09 382.09,273.59 379.16,279.72 375.65,285.41 371.64,290.63 367.18,295.32 362.33,299.46 357.16,303.00 351.74,305.94 346.13,308.27 340.40,309.96 334.62,311.03 328.85,311.49 323.16,311.34 317.61,310.61 312.25,309.33 307.14,307.52 302.32,305.23 297.85,302.50 293.75,299.36 290.06,295.87 286.81,292.08 284.02,288.03 281.70,283.79 279.87,279.40 278.53,274.92 277.68,270.40 277.31,265.89 277.42,261.44 277.97,257.10 278.97,252.91 280.36,248.91 282.14,245.15 284.27,241.65 286.71,238.44 289.42,235.56 292.37,233.02 295.51,230.84 298.81,229.02 302.23,227.59 305.71,226.54 309.22,225.87 312.73,225.57 316.18,225.64 319.56,226.07 322.81,226.83 325.91,227.90 328.83,229.28 331.55,230.92 334.04,232.80 336.27,234.89 338.25,237.17 339.94,239.59 341.35,242.14 342.46,244.77 343.28,247.46 343.80,250.16 344.04,252.86 343.99,255.53 343.67,258.12 343.10,260.63 342.27,263.01 341.23,265.26 339.97,267.35 338.54,269.26 336.94,270.98 335.20,272.49 333.35,273.79 331.40,274.87 329.40,275.73 327.35,276.36 325.28,276.77 323.23,276.95 321.20,276.92 319.23,276.68 317.32,276.25 315.51,275.63 313.80,274.84 312.22,273.90 310.77,272.81 309.47,271.61 308.32,270.30 307.34,268.90 306.52,267.44 305.87,265.93 305.39,264.39 305.08,262.85 304.94,261.30 304.96,259.79 305.13,258.31 305.45,256.89 305.91,255.53 306.49,254.26 307.19,253.08 308.00,252.00 308.89,251.04 309.85,250.18 310.88,249.45 311.96,248.85 313.07,248.36 314.20,248.01 315.34,247.78 316.47,247.67 317.58,247.68 318.66,247.81 319.69,248.04 320.68,248.37 321.60,248.79 322.46,249.29 323.24,249.87 323.94,250.51 324.55,251.21 325.08,251.94 325.52,252.71 325.86,253.51 326.12,254.31 326.28,255.12 326.36,255.92 326.36,256.70 326.27,257.46 326.11,258.19 325.88,258.88 325.59,259.52 325.24,260.12 324.84,260.66 324.40,261.15 323.93,261.57 323.42,261.93 322.90,262.23 322.36,262.47 321.82,262.64 321.27,262.76 320.74,262.81 320.21,262.81 319.71,262.75 319.23,262.65 318.77,262.50 318.35,262.31 317.96,262.08 317.61,261.83" fill="rgb(250, 194, 11)"/><polygon points="314.00,266.26 314.83,266.87 315.74,267.39 316.70,267.83 317.73,268.16 318.79,268.39 319.89,268.51 321.01,268.52 322.14,268.40 323.27,268.17 324.38,267.81 325.46,267.34 326.51,266.74 327.50,266.03 328.42,265.21 329.26,264.29 330.01,263.26 330.66,262.15 331.20,260.96 331.62,259.70 331.91,258.39 332.06,257.04 332.07,255.66 331.93,254.26 331.65,252.87 331.21,251.50 330.63,250.16 329.90,248.87 329.03,247.65 328.01,246.51 326.87,245.46 325.61,244.53 324.24,243.72 322.78,243.05 321.22,242.53 319.60,242.17 317.93,241.98 316.23,241.96 314.50,242.13 312.78,242.48 311.08,243.01 309.42,243.73 307.82,244.63 306.31,245.70 304.89,246.95 303.60,248.36 302.44,249.91 301.43,251.61 300.60,253.42 299.95,255.34 299.50,257.35 299.26,259.42 299.23,261.53 299.43,263.67 299.85,265.80 300.51,267.91 301.39,269.97 302.50,271.95 303.83,273.83 305.37,275.59 307.11,277.20 309.04,278.64 311.14,279.89 313.38,280.93 315.76,281.75 318.25,282.31 320.82,282.62 323.44,282.66 326.09,282.42 328.74,281.90 331.36,281.10 333.92,280.01 336.38,278.64 338.72,276.99 340.91,275.08 342.92,272.93 344.71,270.54 346.27,267.94 347.57,265.15 348.59,262.20 349.30,259.12 349.69,255.93 349.75,252.67 349.46,249.37 348.83,246.08 347.83,242.82 346.49,239.64 344.79,236.57 342.76,233.66 340.39,230.93 337.72,228.43 334.76,226.18 331.53,224.24 328.07,222.61 324.40,221.34 320.56,220.44 316.60,219.94 312.55,219.86 308.45,220.21 304.35,220.99 300.29,222.21 296.33,223.88 292.51,225.98 288.87,228.50 285.47,231.43 282.35,234.75 279.55,238.43 277.11,242.44 275.08,246.75 273.48,251.30 272.35,256.08 271.72,261.01 271.60,266.06 272.02,271.16 272.98,276.27 274.49,281.32 276.55,286.26 279.15,291.03 282.28,295.56 285.92,299.81 290.04,303.71 294.62,307.21 299.60,310.26 304.96,312.80 310.63,314.81 316.57,316.23 322.71,317.04 329.00,317.20 335.36,316.70 341.73,315.52 348.03,313.65 354.19,311.10 360.14,307.88 365.80,303.99 371.11,299.47 375.98,294.35 380.36,288.66 384.17,282.45 387.37,275.79 389.88,268.72 391.68,261.33 392.70,253.67 392.93,245.83 392.32,237.90 390.87,229.96 388.57,222.10 385.41,214.41 381.41,206.98 376.58,199.90 370.96,193.28 364.59,187.18 360.86,191.51 366.80,197.19 372.04,203.37 376.53,209.95 380.24,216.85 383.18,223.99 385.31,231.28 386.65,238.63 387.21,245.97 387.01,253.21 386.06,260.27 384.41,267.09 382.09,273.59 379.16,279.72 375.65,285.41 371.64,290.63 367.18,295.32 362.33,299.46 357.16,303.00 351.74,305.94 346.13,308.27 340.40,309.96 334.62,311.03 328.85,311.49 323.16,311.34 317.61,310.61 312.25,309.33 307.14,307.52 302.32,305.23 297.85,302.50 293.75,299.36 290.06,295.87 286.81,292.08 284.02,288.03 281.70,283.79 279.87,279.40 278.53,274.92 277.68,270.40 277.31,265.89 277.42,261.44 277.97,257.10 278.97,252.91 280.36,248.91 282.14,245.15 284.27,241.65 286.71,238.44 289.42,235.56 292.37,233.02 295.51,230.84 298.81,229.02 302.23,227.59 305.71,226.54 309.22,225.87 312.73,225.57 316.18,225.64 319.56,226.07 322.81,226.83 325.91,227.90 328.83,229.28 331.55,230.92 334.04,232.80 336.27,234.89 338.25,237.17 339.94,239.59 341.35,242.14 342.46,244.77 343.28,247.46 343.80,250.16 344.04,252.86 343.99,255.53 343.67,258.12 343.10,260.63 342.27,263.01 341.23,265.26 339.97,267.35 338.54,269.26 336.94,270.98 335.20,272.49 333.35,273.79 331.40,274.87 329.40,275.73 327.35,276.36 325.28,276.77 323.23,276.95 321.20,276.92 319.23,276.68 317.32,276.25 315.51,275.63 313.80,274.84 312.22,273.90 310.77,272.81 309.47,271.61 308.32,270.30 307.34,268.90 306.52,267.44 305.87,265.93 305.39,264.39 305.08,262.85 304.94,261.30 304.96,259.79 305.13,258.31 305.45,256.89 305.91,255.53 306.49,254.26 307.19,253.08 308.00,252.00 308.89,251.04 309.85,250.18 310.88,249.45 311.96,248.85 313.07,248.36 314.20,248.01 315.34,247.78 316.47,247.67 317.58,247.68 318.66,247.81 319.69,248.04 320.68,248.37 321.60,248.79 322.46,249.29 323.24,249.87 323.94,250.51 324.55,251.21 325.08,251.94 325.52,252.71 325.86,253.51 326.12,254.31 326.28,255.12 326.36,255.92 326.36,256.70 326.27,257.46 326.11,258.19 325.88,258.88 325.59,259.52 325.24,260.12 324.84,260.66 324.40,261.15 323.93,261.57 323.42,261.93 322.90,262.23 322.36,262.47 321.82,262.64 321.27,262.76 320.74,262.81 320.21,262.81 319.71,262.75 319.23,262.65 318.77,262.50 318.35,262.31 317.96,262.08 317.61,261.83" fill="rgb(248, 184, 18)"/><polygon points="314.45,265.70 315.22,266.27 316.06,266.76 316.96,267.16 317.91,267.47 318.90,267.69 319.93,267.80 320.97,267.80 322.03,267.70 323.09,267.48 324.13,267.15 325.14,266.70 326.12,266.14 327.05,265.47 327.92,264.70 328.71,263.83 329.42,262.87 330.03,261.82 330.54,260.70 330.93,259.52 331.20,258.28 331.35,257.00 331.36,255.69 331.23,254.37 330.96,253.05 330.55,251.75 329.99,250.48 329.30,249.25 328.47,248.09 327.51,247.01 326.42,246.01 325.22,245.12 323.91,244.35 322.51,243.72 321.03,243.22 319.49,242.88 317.89,242.69 316.26,242.68 314.61,242.83 312.96,243.17 311.33,243.68 309.74,244.37 308.21,245.23 306.75,246.26 305.39,247.46 304.15,248.81 303.03,250.31 302.07,251.94 301.26,253.69 300.64,255.53 300.20,257.47 299.97,259.46 299.94,261.50 300.13,263.56 300.55,265.63 301.18,267.66 302.03,269.65 303.11,271.57 304.39,273.39 305.88,275.09 307.57,276.65 309.44,278.05 311.47,279.26 313.65,280.27 315.96,281.06 318.37,281.61 320.86,281.91 323.41,281.95 325.99,281.72 328.57,281.21 331.11,280.43 333.60,279.36 336.00,278.03 338.28,276.43 340.41,274.57 342.37,272.47 344.12,270.14 345.64,267.61 346.91,264.89 347.90,262.00 348.60,258.99 348.98,255.88 349.04,252.69 348.76,249.47 348.13,246.25 347.16,243.07 345.84,239.95 344.18,236.95 342.19,234.09 339.88,231.42 337.26,228.97 334.36,226.78 331.19,224.87 327.80,223.27 324.20,222.03 320.44,221.15 316.55,220.66 312.57,220.58 308.54,220.91 304.52,221.68 300.53,222.89 296.64,224.52 292.88,226.59 289.31,229.07 285.96,231.95 282.89,235.21 280.14,238.83 277.74,242.78 275.74,247.02 274.17,251.51 273.06,256.20 272.43,261.06 272.32,266.03 272.73,271.06 273.67,276.10 275.16,281.08 277.19,285.95 279.76,290.65 282.85,295.13 286.44,299.32 290.50,303.17 295.02,306.62 299.94,309.63 305.23,312.14 310.83,314.12 316.70,315.53 322.77,316.32 328.98,316.48 335.27,315.99 341.56,314.82 347.79,312.98 353.89,310.46 359.77,307.27 365.37,303.43 370.62,298.95 375.44,293.88 379.77,288.25 383.55,282.11 386.71,275.51 389.20,268.52 390.97,261.19 391.99,253.61 392.21,245.85 391.61,237.99 390.18,230.12 387.89,222.33 384.76,214.71 380.80,207.35 376.02,200.34 370.44,193.77 364.13,187.72 360.86,191.51 366.80,197.19 372.04,203.37 376.53,209.95 380.24,216.85 383.18,223.99 385.31,231.28 386.65,238.63 387.21,245.97 387.01,253.21 386.06,260.27 384.41,267.09 382.09,273.59 379.16,279.72 375.65,285.41 371.64,290.63 367.18,295.32 362.33,299.46 357.16,303.00 351.74,305.94 346.13,308.27 340.40,309.96 334.62,311.03 328.85,311.49 323.16,311.34 317.61,310.61 312.25,309.33 307.14,307.52 302.32,305.23 297.85,302.50 293.75,299.36 290.06,295.87 286.81,292.08 284.02,288.03 281.70,283.79 279.87,279.40 278.53,274.92 277.68,270.40 277.31,265.89 277.42,261.44 277.97,257.10 278.97,252.91 280.36,248.91 282.14,245.15 284.27,241.65 286.71,238.44 289.42,235.56 292.37,233.02 295.51,230.84 298.81,229.02 302.23,227.59 305.71,226.54 309.22,225.87 312.73,225.57 316.18,225.64 319.56,226.07 322.81,226.83 325.91,227.90 328.83,229.28 331.55,230.92 334.04,232.80 336.27,234.89 338.25,237.17 339.94,239.59 341.35,242.14 342.46,244.77 343.28,247.46 343.80,250.16 344.04,252.86 343.99,255.53 343.67,258.12 343.10,260.63 342.27,263.01 341.23,265.26 339.97,267.35 338.54,269.26 336.94,270.98 335.20,272.49 333.35,273.79 331.40,274.87 329.40,275.73 327.35,276.36 325.28,276.77 323.23,276.95 321.20,276.92 319.23,276.68 317.32,276.25 315.51,275.63 313.80,274.84 312.22,273.90 310.77,272.81 309.47,271.61 308.32,270.30 307.34,268.90 306.52,267.44 305.87,265.93 305.39,264.39 305.08,262.85 304.94,261.30 304.96,259.79 305.13,258.31 305.45,256.89 305.91,255.53 306.49,254.26 307.19,253.08 308.00,252.00 308.89,251.04 309.85,250.18 310.88,249.45 311.96,248.85 313.07,248.36 314.20,248.01 315.34,247.78 316.47,247.67 317.58,247.68 318.66,247.81 319.69,248.04 320.68,248.37 321.60,248.79 322.46,249.29 323.24,249.87 323.94,250.51 324.55,251.21 325.08,251.94 325.52,252.71 325.86,253.51 326.12,254.31 326.28,255.12 326.36,255.92 326.36,256.70 326.27,257.46 326.11,258.19 325.88,258.88 325.59,259.52 325.24,260.12 324.84,260.66 324.40,261.15 323.93,261.57 323.42,261.93 322.90,262.23 322.36,262.47 321.82,262.64 321.27,262.76 320.74,262.81 320.21,262.81 319.71,262.75 319.23,262.65 318.77,262.50 318.35,262.31 317.96,262.08 317.61,261.83" fill="rgb(246, 174, 26)"/><polygon points="314.90,265.15 315.62,265.67 316.39,266.12 317.22,266.49 318.10,266.78 319.02,266.98 319.97,267.09 320.94,267.09 321.92,266.99 322.90,266.79 323.87,266.48 324.82,266.06 325.74,265.54 326.60,264.92 327.41,264.20 328.16,263.38 328.82,262.48 329.40,261.49 329.87,260.44 330.24,259.33 330.50,258.16 330.63,256.95 330.64,255.72 330.52,254.48 330.27,253.23 329.88,252.00 329.35,250.80 328.69,249.64 327.91,248.54 327.00,247.51 325.97,246.56 324.83,245.72 323.58,244.99 322.25,244.38 320.84,243.91 319.37,243.58 317.84,243.41 316.29,243.39 314.71,243.54 313.14,243.86 311.58,244.35 310.06,245.01 308.59,245.83 307.19,246.82 305.89,247.97 304.70,249.27 303.63,250.71 302.70,252.27 301.93,253.95 301.33,255.73 300.91,257.59 300.68,259.51 300.66,261.47 300.84,263.46 301.24,265.45 301.85,267.42 302.67,269.34 303.71,271.19 304.95,272.95 306.40,274.60 308.03,276.11 309.83,277.46 311.80,278.63 313.92,279.61 316.15,280.37 318.49,280.91 320.91,281.20 323.39,281.23 325.89,281.01 328.39,280.52 330.87,279.75 333.29,278.72 335.62,277.42 337.84,275.87 339.92,274.06 341.82,272.01 343.53,269.74 345.01,267.27 346.25,264.62 347.22,261.81 347.89,258.87 348.27,255.83 348.32,252.72 348.05,249.57 347.44,246.42 346.49,243.31 345.20,240.26 343.58,237.33 341.63,234.53 339.36,231.92 336.80,229.52 333.95,227.37 330.86,225.50 327.53,223.94 324.00,222.71 320.31,221.85 316.50,221.37 312.59,221.29 308.64,221.62 304.69,222.38 300.77,223.56 296.95,225.16 293.26,227.19 289.75,229.63 286.46,232.46 283.44,235.67 280.73,239.24 278.37,243.12 276.40,247.29 274.85,251.71 273.76,256.33 273.14,261.12 273.03,266.01 273.43,270.97 274.37,275.93 275.83,280.84 277.84,285.64 280.37,290.28 283.41,294.69 286.95,298.83 290.97,302.62 295.42,306.03 300.28,309.00 305.50,311.48 311.04,313.44 316.83,314.83 322.83,315.61 328.96,315.77 335.18,315.28 341.40,314.13 347.55,312.31 353.58,309.81 359.40,306.66 364.94,302.86 370.13,298.43 374.90,293.42 379.18,287.85 382.92,281.77 386.05,275.24 388.52,268.31 390.27,261.06 391.28,253.55 391.50,245.87 390.90,238.08 389.48,230.29 387.22,222.57 384.12,215.02 380.19,207.72 375.45,200.77 369.92,194.26 363.66,188.26 360.86,191.51 366.80,197.19 372.04,203.37 376.53,209.95 380.24,216.85 383.18,223.99 385.31,231.28 386.65,238.63 387.21,245.97 387.01,253.21 386.06,260.27 384.41,267.09 382.09,273.59 379.16,279.72 375.65,285.41 371.64,290.63 367.18,295.32 362.33,299.46 357.16,303.00 351.74,305.94 346.13,308.27 340.40,309.96 334.62,311.03 328.85,311.49 323.16,311.34 317.61,310.61 312.25,309.33 307.14,307.52 302.32,305.23 297.85,302.50 293.75,299.36 290.06,295.87 286.81,292.08 284.02,288.03 281.70,283.79 279.87,279.40 278.53,274.92 277.68,270.40 277.31,265.89 277.42,261.44 277.97,257.10 278.97,252.91 280.36,248.91 282.14,245.15 284.27,241.65 286.71,238.44 289.42,235.56 292.37,233.02 295.51,230.84 298.81,229.02 302.23,227.59 305.71,226.54 309.22,225.87 312.73,225.57 316.18,225.64 319.56,226.07 322.81,226.83 325.91,227.90 328.83,229.28 331.55,230.92 334.04,232.80 336.27,234.89 338.25,237.17 339.94,239.59 341.35,242.14 342.46,244.77 343.28,247.46 343.80,250.16 344.04,252.86 343.99,255.53 343.67,258.12 343.10,260.63 342.27,263.01 341.23,265.26 339.97,267.35 338.54,269.26 336.94,270.98 335.20,272.49 333.35,273.79 331.40,274.87 329.40,275.73 327.35,276.36 325.28,276.77 323.23,276.95 321.20,276.92 319.23,276.68 317.32,276.25 315.51,275.63 313.80,274.84 312.22,273.90 310.77,272.81 309.47,271.61 308.32,270.30 307.34,268.90 306.52,267.44 305.87,265.93 305.39,264.39 305.08,262.85 304.94,261.30 304.96,259.79 305.13,258.31 305.45,256.89 305.91,255.53 306.49,254.26 307.19,253.08 308.00,252.00 308.89,251.04 309.85,250.18 310.88,249.45 311.96,248.85 313.07,248.36 314.20,248.01 315.34,247.78 316.47,247.67 317.58,247.68 318.66,247.81 319.69,248.04 320.68,248.37 321.60,248.79 322.46,249.29 323.24,249.87 323.94,250.51 324.55,251.21 325.08,251.94 325.52,252.71 325.86,253.51 326.12,254.31 326.28,255.12 326.36,255.92 326.36,256.70 326.27,257.46 326.11,258.19 325.88,258.88 325.59,259.52 325.24,260.12 324.84,260.66 324.40,261.15 323.93,261.57 323.42,261.93 322.90,262.23 322.36,262.47 321.82,262.64 321.27,262.76 320.74,262.81 320.21,262.81 319.71,262.75 319.23,262.65 318.77,262.50 318.35,262.31 317.96,262.08 317.61,261.83" fill="rgb(244, 164, 33)"/><polygon points="315.36,264.60 316.01,265.07 316.72,265.49 317.48,265.83 318.29,266.09 319.13,266.28 320.01,266.37 320.91,266.38 321.81,266.29 322.72,266.10 323.62,265.81 324.50,265.42 325.35,264.94 326.16,264.36 326.91,263.69 327.60,262.93 328.22,262.08 328.76,261.17 329.21,260.18 329.55,259.14 329.79,258.04 329.92,256.91 329.93,255.75 329.81,254.58 329.57,253.41 329.21,252.25 328.71,251.12 328.09,250.02 327.35,248.98 326.49,248.01 325.51,247.12 324.43,246.32 323.25,245.62 321.99,245.05 320.65,244.60 319.25,244.29 317.80,244.12 316.32,244.10 314.82,244.25 313.31,244.55 311.83,245.02 310.37,245.65 308.97,246.44 307.64,247.38 306.39,248.48 305.25,249.72 304.22,251.10 303.33,252.60 302.59,254.21 302.01,255.92 301.61,257.71 301.40,259.56 301.37,261.45 301.55,263.36 301.93,265.27 302.52,267.17 303.31,269.02 304.31,270.81 305.52,272.51 306.91,274.10 308.48,275.56 310.23,276.86 312.14,278.00 314.18,278.95 316.35,279.68 318.61,280.20 320.96,280.48 323.36,280.52 325.79,280.30 328.22,279.82 330.62,279.08 332.97,278.08 335.24,276.82 337.40,275.30 339.42,273.54 341.27,271.55 342.94,269.34 344.38,266.94 345.59,264.35 346.53,261.61 347.19,258.74 347.55,255.78 347.61,252.74 347.34,249.67 346.75,246.59 345.82,243.55 344.56,240.58 342.97,237.71 341.06,234.97 338.85,232.41 336.34,230.07 333.55,227.96 330.52,226.13 327.26,224.60 323.80,223.40 320.19,222.55 316.44,222.08 312.61,222.00 308.74,222.33 304.86,223.07 301.02,224.23 297.26,225.81 293.63,227.80 290.18,230.20 286.95,232.98 283.98,236.14 281.32,239.64 279.00,243.46 277.06,247.56 275.54,251.91 274.46,256.46 273.86,261.17 273.74,265.99 274.14,270.87 275.06,275.76 276.51,280.60 278.48,285.33 280.97,289.91 283.98,294.26 287.47,298.33 291.43,302.08 295.83,305.44 300.62,308.37 305.78,310.82 311.24,312.75 316.96,314.12 322.88,314.90 328.94,315.06 335.08,314.57 341.23,313.43 347.32,311.63 353.27,309.17 359.02,306.05 364.50,302.29 369.64,297.92 374.36,292.95 378.60,287.44 382.29,281.43 385.39,274.96 387.83,268.11 389.57,260.93 390.57,253.50 390.78,245.88 390.20,238.17 388.79,230.45 386.55,222.81 383.47,215.32 379.58,208.09 374.88,201.20 369.40,194.75 363.19,188.81 360.86,191.51 366.80,197.19 372.04,203.37 376.53,209.95 380.24,216.85 383.18,223.99 385.31,231.28 386.65,238.63 387.21,245.97 387.01,253.21 386.06,260.27 384.41,267.09 382.09,273.59 379.16,279.72 375.65,285.41 371.64,290.63 367.18,295.32 362.33,299.46 357.16,303.00 351.74,305.94 346.13,308.27 340.40,309.96 334.62,311.03 328.85,311.49 323.16,311.34 317.61,310.61 312.25,309.33 307.14,307.52 302.32,305.23 297.85,302.50 293.75,299.36 290.06,295.87 286.81,292.08 284.02,288.03 281.70,283.79 279.87,279.40 278.53,274.92 277.68,270.40 277.31,265.89 277.42,261.44 277.97,257.10 278.97,252.91 280.36,248.91 282.14,245.15 284.27,241.65 286.71,238.44 289.42,235.56 292.37,233.02 295.51,230.84 298.81,229.02 302.23,227.59 305.71,226.54 309.22,225.87 312.73,225.57 316.18,225.64 319.56,226.07 322.81,226.83 325.91,227.90 328.83,229.28 331.55,230.92 334.04,232.80 336.27,234.89 338.25,237.17 339.94,239.59 341.35,242.14 342.46,244.77 343.28,247.46 343.80,250.16 344.04,252.86 343.99,255.53 343.67,258.12 343.10,260.63 342.27,263.01 341.23,265.26 339.97,267.35 338.54,269.26 336.94,270.98 335.20,272.49 333.35,273.79 331.40,274.87 329.40,275.73 327.35,276.36 325.28,276.77 323.23,276.95 321.20,276.92 319.23,276.68 317.32,276.25 315.51,275.63 313.80,274.84 312.22,273.90 310.77,272.81 309.47,271.61 308.32,270.30 307.34,268.90 306.52,267.44 305.87,265.93 305.39,264.39 305.08,262.85 304.94,261.30 304.96,259.79 305.13,258.31 305.45,256.89 305.91,255.53 306.49,254.26 307.19,253.08 308.00,252.00 308.89,251.04 309.85,250.18 310.88,249.45 311.96,248.85 313.07,248.36 314.20,248.01 315.34,247.78 316.47,247.67 317.58,247.68 318.66,247.81 319.69,248.04 320.68,248.37 321.60,248.79 322.46,249.29 323.24,249.87 323.94,250.51 324.55,251.21 325.08,251.94 325.52,252.71 325.86,253.51 326.12,254.31 326.28,255.12 326.36,255.92 326.36,256.70 326.27,257.46 326.11,258.19 325.88,258.88 325.59,259.52 325.24,260.12 324.84,260.66 324.40,261.15 323.93,261.57 323.42,261.93 322.90,262.23 322.36,262.47 321.82,262.64 321.27,262.76 320.74,262.81 320.21,262.81 319.71,262.75 319.23,262.65 318.77,262.50 318.35,262.31 317.96,262.08 317.61,261.83" fill="rgb(243, 152, 38)"/><polygon points="315.81,264.04 316.40,264.47 317.04,264.85 317.74,265.16 318.48,265.41 319.25,265.57 320.05,265.66 320.87,265.66 321.71,265.58 322.54,265.41 323.37,265.14 324.18,264.79 324.96,264.34 325.71,263.80 326.41,263.18 327.05,262.47 327.63,261.69 328.13,260.84 328.54,259.92 328.87,258.95 329.09,257.93 329.21,256.87 329.22,255.79 329.11,254.69 328.88,253.59 328.54,252.50 328.07,251.44 327.49,250.41 326.79,249.43 325.98,248.51 325.06,247.67 324.04,246.91 322.92,246.26 321.73,245.71 320.46,245.29 319.13,244.99 317.76,244.83 316.35,244.82 314.92,244.95 313.49,245.24 312.08,245.69 310.69,246.29 309.35,247.04 308.08,247.94 306.89,248.99 305.80,250.18 304.82,251.50 303.96,252.93 303.26,254.48 302.70,256.11 302.32,257.83 302.11,259.60 302.09,261.42 302.26,263.26 302.62,265.10 303.19,266.92 303.96,268.70 304.92,270.43 306.08,272.07 307.42,273.60 308.94,275.01 310.63,276.27 312.47,277.37 314.45,278.28 316.54,279.00 318.74,279.50 321.01,279.77 323.33,279.81 325.69,279.59 328.04,279.13 330.38,278.41 332.66,277.44 334.86,276.21 336.96,274.74 338.92,273.03 340.73,271.09 342.34,268.94 343.75,266.60 344.92,264.08 345.84,261.41 346.49,258.62 346.84,255.73 346.90,252.77 346.63,249.77 346.05,246.77 345.15,243.80 343.92,240.89 342.37,238.08 340.50,235.41 338.33,232.91 335.88,230.61 333.15,228.55 330.18,226.76 326.99,225.26 323.60,224.08 320.06,223.26 316.39,222.79 312.64,222.72 308.83,223.04 305.03,223.76 301.26,224.90 297.57,226.45 294.01,228.41 290.62,230.76 287.44,233.50 284.53,236.60 281.91,240.04 279.63,243.79 277.72,247.83 276.22,252.11 275.16,256.59 274.57,261.22 274.46,265.97 274.85,270.78 275.76,275.59 277.18,280.36 279.12,285.03 281.58,289.53 284.54,293.82 287.99,297.84 291.89,301.54 296.23,304.85 300.96,307.74 306.05,310.16 311.44,312.07 317.09,313.42 322.94,314.19 328.93,314.34 334.99,313.86 341.06,312.74 347.08,310.96 352.96,308.52 358.65,305.44 364.07,301.72 369.14,297.40 373.81,292.49 378.01,287.04 381.67,281.09 384.73,274.69 387.15,267.91 388.87,260.80 389.85,253.44 390.07,245.90 389.49,238.27 388.09,230.62 385.87,223.04 382.83,215.63 378.97,208.46 374.31,201.64 368.88,195.24 362.73,189.35 360.86,191.51 366.80,197.19 372.04,203.37 376.53,209.95 380.24,216.85 383.18,223.99 385.31,231.28 386.65,238.63 387.21,245.97 387.01,253.21 386.06,260.27 384.41,267.09 382.09,273.59 379.16,279.72 375.65,285.41 371.64,290.63 367.18,295.32 362.33,299.46 357.16,303.00 351.74,305.94 346.13,308.27 340.40,309.96 334.62,311.03 328.85,311.49 323.16,311.34 317.61,310.61 312.25,309.33 307.14,307.52 302.32,305.23 297.85,302.50 293.75,299.36 290.06,295.87 286.81,292.08 284.02,288.03 281.70,283.79 279.87,279.40 278.53,274.92 277.68,270.40 277.31,265.89 277.42,261.44 277.97,257.10 278.97,252.91 280.36,248.91 282.14,245.15 284.27,241.65 286.71,238.44 289.42,235.56 292.37,233.02 295.51,230.84 298.81,229.02 302.23,227.59 305.71,226.54 309.22,225.87 312.73,225.57 316.18,225.64 319.56,226.07 322.81,226.83 325.91,227.90 328.83,229.28 331.55,230.92 334.04,232.80 336.27,234.89 338.25,237.17 339.94,239.59 341.35,242.14 342.46,244.77 343.28,247.46 343.80,250.16 344.04,252.86 343.99,255.53 343.67,258.12 343.10,260.63 342.27,263.01 341.23,265.26 339.97,267.35 338.54,269.26 336.94,270.98 335.20,272.49 333.35,273.79 331.40,274.87 329.40,275.73 327.35,276.36 325.28,276.77 323.23,276.95 321.20,276.92 319.23,276.68 317.32,276.25 315.51,275.63 313.80,274.84 312.22,273.90 310.77,272.81 309.47,271.61 308.32,270.30 307.34,268.90 306.52,267.44 305.87,265.93 305.39,264.39 305.08,262.85 304.94,261.30 304.96,259.79 305.13,258.31 305.45,256.89 305.91,255.53 306.49,254.26 307.19,253.08 308.00,252.00 308.89,251.04 309.85,250.18 310.88,249.45 311.96,248.85 313.07,248.36 314.20,248.01 315.34,247.78 316.47,247.67 317.58,247.68 318.66,247.81 319.69,248.04 320.68,248.37 321.60,248.79 322.46,249.29 323.24,249.87 323.94,250.51 324.55,251.21 325.08,251.94 325.52,252.71 325.86,253.51 326.12,254.31 326.28,255.12 326.36,255.92 326.36,256.70 326.27,257.46 326.11,258.19 325.88,258.88 325.59,259.52 325.24,260.12 324.84,260.66 324.40,261.15 323.93,261.57 323.42,261.93 322.90,262.23 322.36,262.47 321.82,262.64 321.27,262.76 320.74,262.81 320.21,262.81 319.71,262.75 319.23,262.65 318.77,262.50 318.35,262.31 317.96,262.08 317.61,261.83" fill="rgb(241, 134, 39)"/><polygon points="316.26,263.49 316.79,263.88 317.37,264.22 318.00,264.50 318.66,264.72 319.36,264.87 320.09,264.95 320.84,264.95 321.60,264.87 322.36,264.72 323.12,264.47 323.86,264.15 324.58,263.74 325.26,263.24 325.91,262.67 326.50,262.02 327.03,261.30 327.49,260.51 327.88,259.66 328.18,258.76 328.39,257.81 328.50,256.83 328.50,255.82 328.40,254.80 328.19,253.77 327.87,252.75 327.43,251.76 326.89,250.79 326.23,249.87 325.47,249.01 324.60,248.22 323.64,247.51 322.59,246.89 321.47,246.37 320.27,245.97 319.01,245.69 317.71,245.54 316.38,245.53 315.02,245.66 313.67,245.93 312.32,246.36 311.01,246.93 309.74,247.64 308.52,248.50 307.39,249.50 306.35,250.64 305.41,251.89 304.60,253.27 303.92,254.74 303.39,256.31 303.02,257.95 302.82,259.65 302.80,261.39 302.96,263.15 303.31,264.92 303.86,266.67 304.60,268.39 305.52,270.05 306.64,271.62 307.93,273.10 309.40,274.46 311.03,275.68 312.80,276.74 314.71,277.62 316.74,278.31 318.86,278.79 321.06,279.06 323.31,279.09 325.59,278.89 327.87,278.44 330.13,277.74 332.35,276.80 334.48,275.61 336.52,274.18 338.43,272.52 340.18,270.63 341.75,268.55 343.12,266.27 344.26,263.82 345.16,261.22 345.78,258.50 346.13,255.68 346.18,252.79 345.93,249.87 345.36,246.94 344.48,244.04 343.27,241.20 341.76,238.46 339.94,235.85 337.82,233.40 335.42,231.16 332.75,229.14 329.84,227.39 326.72,225.92 323.41,224.77 319.93,223.96 316.34,223.51 312.66,223.43 308.93,223.75 305.20,224.46 301.50,225.57 297.88,227.09 294.39,229.01 291.06,231.32 287.94,234.01 285.07,237.06 282.50,240.44 280.26,244.13 278.38,248.10 276.91,252.31 275.87,256.71 275.28,261.28 275.17,265.95 275.56,270.68 276.45,275.43 277.85,280.12 279.77,284.72 282.19,289.16 285.11,293.39 288.51,297.35 292.36,300.99 296.63,304.26 301.30,307.12 306.32,309.50 311.64,311.38 317.22,312.72 322.99,313.48 328.91,313.63 334.90,313.16 340.90,312.04 346.84,310.29 352.66,307.88 358.28,304.83 363.63,301.16 368.65,296.88 373.27,292.02 377.42,286.63 381.04,280.74 384.07,274.42 386.46,267.70 388.17,260.67 389.14,253.38 389.35,245.92 388.78,238.36 387.40,230.78 385.20,223.28 382.18,215.93 378.36,208.83 373.74,202.07 368.36,195.72 362.26,189.89 360.86,191.51 366.80,197.19 372.04,203.37 376.53,209.95 380.24,216.85 383.18,223.99 385.31,231.28 386.65,238.63 387.21,245.97 387.01,253.21 386.06,260.27 384.41,267.09 382.09,273.59 379.16,279.72 375.65,285.41 371.64,290.63 367.18,295.32 362.33,299.46 357.16,303.00 351.74,305.94 346.13,308.27 340.40,309.96 334.62,311.03 328.85,311.49 323.16,311.34 317.61,310.61 312.25,309.33 307.14,307.52 302.32,305.23 297.85,302.50 293.75,299.36 290.06,295.87 286.81,292.08 284.02,288.03 281.70,283.79 279.87,279.40 278.53,274.92 277.68,270.40 277.31,265.89 277.42,261.44 277.97,257.10 278.97,252.91 280.36,248.91 282.14,245.15 284.27,241.65 286.71,238.44 289.42,235.56 292.37,233.02 295.51,230.84 298.81,229.02 302.23,227.59 305.71,226.54 309.22,225.87 312.73,225.57 316.18,225.64 319.56,226.07 322.81,226.83 325.91,227.90 328.83,229.28 331.55,230.92 334.04,232.80 336.27,234.89 338.25,237.17 339.94,239.59 341.35,242.14 342.46,244.77 343.28,247.46 343.80,250.16 344.04,252.86 343.99,255.53 343.67,258.12 343.10,260.63 342.27,263.01 341.23,265.26 339.97,267.35 338.54,269.26 336.94,270.98 335.20,272.49 333.35,273.79 331.40,274.87 329.40,275.73 327.35,276.36 325.28,276.77 323.23,276.95 321.20,276.92 319.23,276.68 317.32,276.25 315.51,275.63 313.80,274.84 312.22,273.90 310.77,272.81 309.47,271.61 308.32,270.30 307.34,268.90 306.52,267.44 305.87,265.93 305.39,264.39 305.08,262.85 304.94,261.30 304.96,259.79 305.13,258.31 305.45,256.89 305.91,255.53 306.49,254.26 307.19,253.08 308.00,252.00 308.89,251.04 309.85,250.18 310.88,249.45 311.96,248.85 313.07,248.36 314.20,248.01 315.34,247.78 316.47,247.67 317.58,247.68 318.66,247.81 319.69,248.04 320.68,248.37 321.60,248.79 322.46,249.29 323.24,249.87 323.94,250.51 324.55,251.21 325.08,251.94 325.52,252.71 325.86,253.51 326.12,254.31 326.28,255.12 326.36,255.92 326.36,256.70 326.27,257.46 326.11,258.19 325.88,258.88 325.59,259.52 325.24,260.12 324.84,260.66 324.40,261.15 323.93,261.57 323.42,261.93 322.90,262.23 322.36,262.47 321.82,262.64 321.27,262.76 320.74,262.81 320.21,262.81 319.71,262.75 319.23,262.65 318.77,262.50 318.35,262.31 317.96,262.08 317.61,261.83" fill="rgb(239, 117, 39)"/><polygon points="316.71,262.93 317.18,263.28 317.70,263.58 318.26,263.83 318.85,264.03 319.48,264.16 320.13,264.23 320.80,264.24 321.49,264.17 322.18,264.02 322.86,263.81 323.54,263.51 324.19,263.14 324.82,262.69 325.41,262.16 325.95,261.57 326.43,260.91 326.86,260.18 327.21,259.40 327.49,258.57 327.68,257.69 327.78,256.78 327.79,255.85 327.70,254.90 327.50,253.95 327.20,253.00 326.80,252.07 326.29,251.17 325.67,250.32 324.96,249.51 324.15,248.77 323.25,248.10 322.26,247.52 321.20,247.04 320.08,246.66 318.89,246.40 317.67,246.26 316.41,246.25 315.13,246.37 313.85,246.63 312.57,247.03 311.33,247.57 310.12,248.25 308.97,249.06 307.89,250.01 306.90,251.09 306.00,252.29 305.23,253.60 304.58,255.01 304.08,256.50 303.72,258.07 303.53,259.69 303.51,261.36 303.67,263.05 304.01,264.75 304.53,266.43 305.24,268.07 306.13,269.66 307.20,271.18 308.44,272.60 309.86,273.91 311.42,275.08 313.14,276.10 314.98,276.96 316.93,277.62 318.98,278.09 321.10,278.35 323.28,278.38 325.49,278.18 327.70,277.75 329.89,277.07 332.03,276.16 334.10,275.00 336.08,273.62 337.93,272.00 339.63,270.18 341.16,268.15 342.49,265.93 343.60,263.55 344.47,261.02 345.08,258.37 345.42,255.63 345.47,252.82 345.22,249.97 344.67,247.11 343.80,244.28 342.63,241.51 341.15,238.84 339.37,236.29 337.30,233.90 334.96,231.70 332.35,229.73 329.51,228.02 326.45,226.58 323.21,225.46 319.81,224.66 316.29,224.22 312.68,224.15 309.03,224.45 305.37,225.15 301.74,226.25 298.19,227.74 294.76,229.62 291.49,231.89 288.43,234.53 285.62,237.52 283.09,240.84 280.88,244.47 279.04,248.37 277.59,252.51 276.57,256.84 275.99,261.33 275.89,265.93 276.27,270.59 277.14,275.26 278.53,279.88 280.41,284.41 282.80,288.78 285.68,292.95 289.02,296.86 292.82,300.45 297.04,303.67 301.64,306.49 306.59,308.84 311.85,310.70 317.35,312.02 323.05,312.76 328.89,312.91 334.80,312.45 340.73,311.35 346.60,309.61 352.35,307.23 357.91,304.22 363.20,300.59 368.16,296.36 372.73,291.56 376.83,286.23 380.41,280.40 383.41,274.14 385.78,267.50 387.46,260.53 388.43,253.32 388.64,245.93 388.07,238.45 386.70,230.95 384.52,223.52 381.54,216.24 377.75,209.20 373.17,202.50 367.84,196.21 361.79,190.43 360.86,191.51 366.80,197.19 372.04,203.37 376.53,209.95 380.24,216.85 383.18,223.99 385.31,231.28 386.65,238.63 387.21,245.97 387.01,253.21 386.06,260.27 384.41,267.09 382.09,273.59 379.16,279.72 375.65,285.41 371.64,290.63 367.18,295.32 362.33,299.46 357.16,303.00 351.74,305.94 346.13,308.27 340.40,309.96 334.62,311.03 328.85,311.49 323.16,311.34 317.61,310.61 312.25,309.33 307.14,307.52 302.32,305.23 297.85,302.50 293.75,299.36 290.06,295.87 286.81,292.08 284.02,288.03 281.70,283.79 279.87,279.40 278.53,274.92 277.68,270.40 277.31,265.89 277.42,261.44 277.97,257.10 278.97,252.91 280.36,248.91 282.14,245.15 284.27,241.65 286.71,238.44 289.42,235.56 292.37,233.02 295.51,230.84 298.81,229.02 302.23,227.59 305.71,226.54 309.22,225.87 312.73,225.57 316.18,225.64 319.56,226.07 322.81,226.83 325.91,227.90 328.83,229.28 331.55,230.92 334.04,232.80 336.27,234.89 338.25,237.17 339.94,239.59 341.35,242.14 342.46,244.77 343.28,247.46 343.80,250.16 344.04,252.86 343.99,255.53 343.67,258.12 343.10,260.63 342.27,263.01 341.23,265.26 339.97,267.35 338.54,269.26 336.94,270.98 335.20,272.49 333.35,273.79 331.40,274.87 329.40,275.73 327.35,276.36 325.28,276.77 323.23,276.95 321.20,276.92 319.23,276.68 317.32,276.25 315.51,275.63 313.80,274.84 312.22,273.90 310.77,272.81 309.47,271.61 308.32,270.30 307.34,268.90 306.52,267.44 305.87,265.93 305.39,264.39 305.08,262.85 304.94,261.30 304.96,259.79 305.13,258.31 305.45,256.89 305.91,255.53 306.49,254.26 307.19,253.08 308.00,252.00 308.89,251.04 309.85,250.18 310.88,249.45 311.96,248.85 313.07,248.36 314.20,248.01 315.34,247.78 316.47,247.67 317.58,247.68 318.66,247.81 319.69,248.04 320.68,248.37 321.60,248.79 322.46,249.29 323.24,249.87 323.94,250.51 324.55,251.21 325.08,251.94 325.52,252.71 325.86,253.51 326.12,254.31 326.28,255.12 326.36,255.92 326.36,256.70 326.27,257.46 326.11,258.19 325.88,258.88 325.59,259.52 325.24,260.12 324.84,260.66 324.40,261.15 323.93,261.57 323.42,261.93 322.90,262.23 322.36,262.47 321.82,262.64 321.27,262.76 320.74,262.81 320.21,262.81 319.71,262.75 319.23,262.65 318.77,262.50 318.35,262.31 317.96,262.08 317.61,261.83" fill="rgb(237, 96, 39)"/><polygon points="317.16,262.38 317.57,262.68 318.02,262.94 318.51,263.16 319.04,263.34 319.59,263.46 320.17,263.52 320.77,263.52 321.38,263.46 322.00,263.33 322.61,263.14 323.22,262.87 323.81,262.53 324.37,262.13 324.90,261.66 325.39,261.12 325.84,260.51 326.22,259.85 326.55,259.14 326.80,258.38 326.98,257.58 327.07,256.74 327.08,255.88 326.99,255.01 326.81,254.13 326.53,253.25 326.16,252.39 325.68,251.56 325.11,250.76 324.45,250.01 323.69,249.32 322.85,248.70 321.93,248.16 320.94,247.70 319.89,247.35 318.78,247.10 317.62,246.97 316.44,246.96 315.23,247.07 314.02,247.32 312.82,247.70 311.64,248.21 310.50,248.85 309.41,249.62 308.39,250.52 307.45,251.55 306.60,252.69 305.86,253.93 305.25,255.27 304.77,256.69 304.43,258.19 304.25,259.74 304.23,261.33 304.38,262.95 304.70,264.57 305.20,266.18 305.88,267.76 306.73,269.28 307.76,270.74 308.96,272.11 310.31,273.36 311.82,274.49 313.47,275.47 315.24,276.29 317.13,276.94 319.10,277.39 321.15,277.63 323.25,277.66 325.38,277.47 327.52,277.05 329.64,276.40 331.72,275.52 333.73,274.40 335.64,273.05 337.43,271.49 339.08,269.72 340.57,267.75 341.86,265.60 342.94,263.28 343.78,260.82 344.38,258.25 344.70,255.58 344.75,252.84 344.51,250.07 343.97,247.28 343.13,244.53 341.99,241.83 340.55,239.22 338.81,236.73 336.79,234.40 334.50,232.25 331.95,230.32 329.17,228.65 326.18,227.24 323.01,226.14 319.68,225.36 316.24,224.93 312.70,224.86 309.13,225.16 305.54,225.85 301.98,226.92 298.50,228.38 295.14,230.23 291.93,232.45 288.93,235.04 286.16,237.98 283.68,241.25 281.51,244.81 279.70,248.64 278.28,252.71 277.27,256.97 276.70,261.39 276.60,265.91 276.97,270.49 277.84,275.09 279.20,279.64 281.06,284.10 283.41,288.41 286.24,292.51 289.54,296.36 293.28,299.90 297.44,303.09 301.98,305.86 306.87,308.18 312.05,310.01 317.48,311.31 323.10,312.05 328.87,312.20 334.71,311.74 340.56,310.66 346.36,308.94 352.04,306.59 357.53,303.61 362.76,300.02 367.67,295.84 372.18,291.09 376.24,285.82 379.78,280.06 382.75,273.87 385.09,267.29 386.76,260.40 387.72,253.26 387.93,245.95 387.36,238.54 386.01,231.11 383.85,223.75 380.89,216.54 377.14,209.58 372.61,202.93 367.32,196.70 361.33,190.97 360.86,191.51 366.80,197.19 372.04,203.37 376.53,209.95 380.24,216.85 383.18,223.99 385.31,231.28 386.65,238.63 387.21,245.97 387.01,253.21 386.06,260.27 384.41,267.09 382.09,273.59 379.16,279.72 375.65,285.41 371.64,290.63 367.18,295.32 362.33,299.46 357.16,303.00 351.74,305.94 346.13,308.27 340.40,309.96 334.62,311.03 328.85,311.49 323.16,311.34 317.61,310.61 312.25,309.33 307.14,307.52 302.32,305.23 297.85,302.50 293.75,299.36 290.06,295.87 286.81,292.08 284.02,288.03 281.70,283.79 279.87,279.40 278.53,274.92 277.68,270.40 277.31,265.89 277.42,261.44 277.97,257.10 278.97,252.91 280.36,248.91 282.14,245.15 284.27,241.65 286.71,238.44 289.42,235.56 292.37,233.02 295.51,230.84 298.81,229.02 302.23,227.59 305.71,226.54 309.22,225.87 312.73,225.57 316.18,225.64 319.56,226.07 322.81,226.83 325.91,227.90 328.83,229.28 331.55,230.92 334.04,232.80 336.27,234.89 338.25,237.17 339.94,239.59 341.35,242.14 342.46,244.77 343.28,247.46 343.80,250.16 344.04,252.86 343.99,255.53 343.67,258.12 343.10,260.63 342.27,263.01 341.23,265.26 339.97,267.35 338.54,269.26 336.94,270.98 335.20,272.49 333.35,273.79 331.40,274.87 329.40,275.73 327.35,276.36 325.28,276.77 323.23,276.95 321.20,276.92 319.23,276.68 317.32,276.25 315.51,275.63 313.80,274.84 312.22,273.90 310.77,272.81 309.47,271.61 308.32,270.30 307.34,268.90 306.52,267.44 305.87,265.93 305.39,264.39 305.08,262.85 304.94,261.30 304.96,259.79 305.13,258.31 305.45,256.89 305.91,255.53 306.49,254.26 307.19,253.08 308.00,252.00 308.89,251.04 309.85,250.18 310.88,249.45 311.96,248.85 313.07,248.36 314.20,248.01 315.34,247.78 316.47,247.67 317.58,247.68 318.66,247.81 319.69,248.04 320.68,248.37 321.60,248.79 322.46,249.29 323.24,249.87 323.94,250.51 324.55,251.21 325.08,251.94 325.52,252.71 325.86,253.51 326.12,254.31 326.28,255.12 326.36,255.92 326.36,256.70 326.27,257.46 326.11,258.19 325.88,258.88 325.59,259.52 325.24,260.12 324.84,260.66 324.40,261.15 323.93,261.57 323.42,261.93 322.90,262.23 322.36,262.47 321.82,262.64 321.27,262.76 320.74,262.81 320.21,262.81 319.71,262.75 319.23,262.65 318.77,262.50 318.35,262.31 317.96,262.08 317.61,261.83" fill="rgb(230, 63, 33)"/></svg>
<div style="left:652.4px;top:52.6px;width:7.8px;height:450px;background:#4a4a4a;"></div>
<div style="left:660.2px;top:37px;width:1.8px;height:467px;background:#444444;"></div>
<svg style="left:653px;top:54px;" width="8" height="6" viewBox="0 0 8 6"><path d="M2 4.2L4 2.2L6 4.2" fill="none" stroke="#bbb" stroke-width="0.9"/></svg>
<svg style="left:653px;top:486px;" width="8" height="6" viewBox="0 0 8 6"><path d="M2 1.8L4 3.8L6 1.8" fill="none" stroke="#bbb" stroke-width="0.9"/></svg>
<div style="left:652.6px;top:265.6px;width:7.6px;height:13.6px;background:#6b6b6b;border-radius:3.8px;"></div>
<div style="left:24.4px;top:494px;width:636px;height:9px;background:#4a4a4a;"></div>
<div style="left:24.4px;top:494px;width:231px;height:9px;background:#505050;"></div>
<div style="left:26.7px;top:494px;width:26.3px;height:8.8px;background:#3d3d3d;"></div>
<span class="t m" style="transform:scaleX(0.884);left:27.8px;top:494.4px;font-size:7px;line-height:10px;color:#e0e0e0;">66.35%</span>
<svg style="left:53.8px;top:496px;" width="8" height="6" viewBox="0 0 8 6"><path d="M1.7999999999999998 1.9L4 4.1L6.2 1.9" fill="none" stroke="#e8e8e8" stroke-width="1.1"/></svg>
<svg style="left:66.6px;top:496px;" width="6" height="6" viewBox="0 0 6 6"><g transform="translate(0.6,0)"><path d="M3.6 0.6L0.8 3L3.6 5.4Z" fill="#6a6a6a"/><rect x="-0.6" y="0.6" width="0.9" height="4.8" fill="#6a6a6a"/></g></svg>
<svg style="left:76.4px;top:496px;" width="6" height="6" viewBox="0 0 6 6"><g transform="translate(0.6,0)"><path d="M3.6 0.6L0.8 3L3.6 5.4Z" fill="#6a6a6a"/></g></svg>
<div style="left:86px;top:494px;width:20.4px;height:8.8px;background:#3d3d3d;"></div>
<span class="t" style="left:87.6px;top:494.6px;font-size:7px;line-height:10px;color:#e8e8e8;">1</span>
<svg style="left:107.5px;top:496px;" width="8" height="6" viewBox="0 0 8 6"><path d="M1.7999999999999998 1.9L4 4.1L6.2 1.9" fill="none" stroke="#e8e8e8" stroke-width="1.1"/></svg>
<svg style="left:121px;top:496px;" width="6" height="6" viewBox="0 0 6 6"><g transform="translate(0.6,0)"><path d="M0.8 0.6L3.6 3L0.8 5.4Z" fill="#6a6a6a"/></g></svg>
<svg style="left:129.6px;top:496px;" width="6" height="6" viewBox="0 0 6 6"><g transform="translate(0.6,0)"><path d="M0.8 0.6L3.6 3L0.8 5.4Z" fill="#6a6a6a"/><rect x="4.1" y="0.6" width="0.9" height="4.8" fill="#6a6a6a"/></g></svg>
<span class="t m" style="transform:scaleX(0.758);left:187.6px;top:494.2px;font-size:6.6px;line-height:10px;color:#e0e0e0;">選択</span>
<svg style="left:249px;top:495px;" width="6" height="8" viewBox="0 0 6 8"><path d="M1.4 1L4.6 3.6L1.4 6.2Z" fill="#e8e8e8"/></svg>
<svg style="left:258px;top:495px;" width="6" height="8" viewBox="0 0 6 8"><path d="M3.8 1.4L1.8 3.6L3.8 5.8" fill="none" stroke="#bbb" stroke-width="0.8"/></svg>
<div style="left:447px;top:495px;width:13.6px;height:6.6px;background:#6b6b6b;border-radius:3.3px;"></div>
<svg style="left:644px;top:495px;" width="6" height="8" viewBox="0 0 6 8"><path d="M2.2 1.4L4.2 3.6L2.2 5.8" fill="none" stroke="#bbb" stroke-width="0.8"/></svg>
<div style="left:662px;top:37px;width:138px;height:6.5px;background:#414141;"></div>
<svg style="left:788.4px;top:38.6px;" width="6" height="4" viewBox="0 0 6 4"><path d="M0.5 0.5L1.9 1.5L0.5 2.5ZM2.7 0.5L4.1 1.5L2.7 2.5Z" fill="#e8e8e8"/></svg>
<div style="left:662.2px;top:43.5px;width:138px;height:14.2px;background:#494949;"></div>
<div style="left:766.8px;top:43.5px;width:33.2px;height:14.2px;background:#444444;"></div>
<div style="left:695.2px;top:43.5px;width:29.8px;height:14.5px;background:#535353;"></div>
<div style="left:694.6px;top:43px;width:0.8px;height:14.6px;background:#3e3e3e;"></div>
<div style="left:724.8px;top:43px;width:0.8px;height:14.6px;background:#3e3e3e;"></div>
<div style="left:766px;top:43px;width:0.8px;height:14.6px;background:#3e3e3e;"></div>
<span class="t m" style="transform:scaleX(0.771);left:667.4px;top:45px;font-size:6.3px;line-height:11px;color:#bdbdbd;">プロパティ</span>
<span class="t m" style="transform:scaleX(0.840);left:700px;top:45px;font-size:6.3px;line-height:11px;color:#f2f2f2;font-weight:500;">レイヤー</span>
<span class="t m" style="transform:scaleX(0.779);left:729.6px;top:45px;font-size:6.3px;line-height:11px;color:#bdbdbd;">CC ライブラリ</span>
<svg style="left:787.6px;top:48px;" width="7" height="6" viewBox="0 0 7 6"><g fill="#8e8e8e"><rect x="0.4" y="0.3" width="5.4" height="1"/><rect x="0.4" y="1.7" width="5.4" height="1"/><rect x="0.4" y="3.1" width="5.4" height="1"/><rect x="0.4" y="4.5" width="5.4" height="0.9"/></g></svg>
<div style="left:662px;top:57.6px;width:138px;height:446px;background:#535353;"></div>
<div style="left:664.6px;top:60.6px;width:130.6px;height:429.6px;border:0.7px solid #5f5f5f;box-sizing:border-box;"></div>
<div style="left:665.3px;top:61.4px;width:129.2px;height:10.9px;background:#4f4f4f;"></div>
<div style="left:796px;top:58px;width:4px;height:446px;background:#4b4b4b;"></div>
<div style="left:665.3px;top:73px;width:129.2px;height:10.8px;background:#4a607a;"></div>
<div style="left:675.6px;top:61.4px;width:1.2px;height:10.9px;background:#5a5a5a;"></div>
<div style="left:687.2px;top:61.4px;width:0.8px;height:10.9px;background:#5a5a5a;"></div>
<div style="left:773.8px;top:61.4px;width:0.8px;height:10.9px;background:#5a5a5a;"></div>
<div style="left:675.6px;top:73px;width:1.2px;height:10.8px;background:#5a708a;"></div>
<div style="left:773.8px;top:73px;width:0.8px;height:10.8px;background:#5a708a;"></div>
<div style="left:688.2px;top:62px;width:2px;height:9.8px;background:#4f80ff;"></div>
<div style="left:688.2px;top:73px;width:2px;height:10px;background:#4f80ff;"></div>
<svg style="left:667px;top:64px;" width="8" height="6" viewBox="0 0 8 6"><path d="M0.5 3C2 0.6 6 0.6 7.5 3C6 5.4 2 5.4 0.5 3Z" fill="#e6e6e6"/><circle cx="4" cy="3" r="1.4" fill="#505050"/><circle cx="4" cy="3" r="0.6" fill="#e6e6e6"/></svg>
<svg style="left:667px;top:75px;" width="8" height="6" viewBox="0 0 8 6"><path d="M0.5 3C2 0.6 6 0.6 7.5 3C6 5.4 2 5.4 0.5 3Z" fill="#e6e6e6"/><circle cx="4" cy="3" r="1.4" fill="#505050"/><circle cx="4" cy="3" r="0.6" fill="#e6e6e6"/></svg>
<svg style="left:692.8px;top:64px;" width="8" height="6" viewBox="0 0 8 6"><path d="M1.7000000000000002 1.85L4 4.15L6.3 1.85" fill="none" stroke="#ececec" stroke-width="1.2"/></svg>
<svg style="left:702.9px;top:61.9px;" width="11" height="11" viewBox="0 0 11 11"><rect x="0.5" y="0.5" width="9.4" height="9.4" rx="1.3" fill="#fff" stroke="#1e1e1e" stroke-width="0.9"/><polyline points="4.02,5.63 4.01,5.87 4.05,6.11 4.16,6.34 4.33,6.54 4.55,6.70 4.82,6.79 5.12,6.82 5.42,6.76 5.71,6.63 5.96,6.41 6.15,6.13 6.27,5.79 6.30,5.42 6.23,5.05 6.05,4.69 5.78,4.37 5.43,4.13 5.01,3.99 4.55,3.95 4.07,4.04 3.63,4.26 3.24,4.60 2.94,5.05 2.76,5.57 2.72,6.15 2.83,6.74 3.11,7.30 3.54,7.79 4.09,8.16 4.75,8.38 5.48,8.43 6.21,8.28 6.91,7.93 7.52,7.40 7.98,6.70 8.26,5.87 8.31,4.96 8.12,4.04 7.68,3.17 7.01,2.42" fill="none" stroke="#ef5f26" stroke-width="1.5"/><polyline points="4.02,5.63 4.01,5.87 4.05,6.11 4.16,6.34 4.33,6.54 4.55,6.70 4.82,6.79 5.12,6.82 5.42,6.76 5.71,6.63 5.96,6.41 6.15,6.13 6.27,5.79 6.30,5.42 6.23,5.05 6.05,4.69 5.78,4.37 5.43,4.13 5.01,3.99 4.55,3.95 4.07,4.04 3.63,4.26 3.24,4.60 2.94,5.05 2.76,5.57 2.72,6.15 2.83,6.74 3.11,7.30 3.54,7.79 4.09,8.16 4.75,8.38 5.48,8.43 6.21,8.28 6.91,7.93 7.52,7.40 7.98,6.70 8.26,5.87 8.31,4.96 8.12,4.04 7.68,3.17 7.01,2.42" fill="none" stroke="#fdbb2d" stroke-width="0.7"/></svg>
<svg style="left:716.2px;top:72.8px;" width="11" height="11" viewBox="0 0 11 11"><rect x="0.5" y="0.5" width="9.4" height="9.4" rx="1.3" fill="#fff" stroke="#1e1e1e" stroke-width="0.9"/><polyline points="4.02,5.63 4.01,5.87 4.05,6.11 4.16,6.34 4.33,6.54 4.55,6.70 4.82,6.79 5.12,6.82 5.42,6.76 5.71,6.63 5.96,6.41 6.15,6.13 6.27,5.79 6.30,5.42 6.23,5.05 6.05,4.69 5.78,4.37 5.43,4.13 5.01,3.99 4.55,3.95 4.07,4.04 3.63,4.26 3.24,4.60 2.94,5.05 2.76,5.57 2.72,6.15 2.83,6.74 3.11,7.30 3.54,7.79 4.09,8.16 4.75,8.38 5.48,8.43 6.21,8.28 6.91,7.93 7.52,7.40 7.98,6.70 8.26,5.87 8.31,4.96 8.12,4.04 7.68,3.17 7.01,2.42" fill="none" stroke="#ef5f26" stroke-width="1.5"/><polyline points="4.02,5.63 4.01,5.87 4.05,6.11 4.16,6.34 4.33,6.54 4.55,6.70 4.82,6.79 5.12,6.82 5.42,6.76 5.71,6.63 5.96,6.41 6.15,6.13 6.27,5.79 6.30,5.42 6.23,5.05 6.05,4.69 5.78,4.37 5.43,4.13 5.01,3.99 4.55,3.95 4.07,4.04 3.63,4.26 3.24,4.60 2.94,5.05 2.76,5.57 2.72,6.15 2.83,6.74 3.11,7.30 3.54,7.79 4.09,8.16 4.75,8.38 5.48,8.43 6.21,8.28 6.91,7.93 7.52,7.40 7.98,6.70 8.26,5.87 8.31,4.96 8.12,4.04 7.68,3.17 7.01,2.42" fill="none" stroke="#fdbb2d" stroke-width="0.7"/></svg>
<span class="t m" style="transform:scaleX(0.863);left:716.4px;top:61.8px;font-size:7.6px;line-height:11px;color:#f6f6f6;font-weight:500;">レイヤー 1</span>
<span class="t m" style="transform:scaleX(0.905);left:729px;top:72.8px;font-size:7.6px;line-height:11px;color:#f6f6f6;font-weight:500;">&lt; パス &gt;</span>
<svg style="left:776px;top:64px;" width="8" height="8" viewBox="0 0 8 8"><circle cx="3.6" cy="3.4" r="2" fill="none" stroke="#e0e0e0" stroke-width="0.9"/></svg>
<svg style="left:776px;top:75px;" width="8" height="8" viewBox="0 0 8 8"><circle cx="3.6" cy="3.2" r="1.8" fill="none" stroke="#a8b0bb" stroke-width="0.8"/></svg>
<svg style="left:789px;top:61px;" width="6" height="5" viewBox="0 0 6 5"><path d="M0.6 0.5H4.7V3.6Z" fill="#f2f2f2"/></svg>
<span class="t m" style="transform:scaleX(0.907);left:665.4px;top:492.2px;font-size:7px;line-height:11px;color:#e6e6e6;">1 レイヤー</span>
<svg style="left:704px;top:493px;" width="9" height="9" viewBox="0 0 9 9"><path d="M4.2 1.6H1.4V7.4H7.2V4.6" fill="none" stroke="#dcdcdc" stroke-width="0.9"/><path d="M4.4 4.4L7.4 1.4M5.2 1.2H7.6V3.6" fill="none" stroke="#dcdcdc" stroke-width="0.9"/></svg>
<svg style="left:718px;top:493px;" width="9" height="9" viewBox="0 0 9 9"><circle cx="3.6" cy="3.6" r="2.2" fill="none" stroke="#6c6c6c" stroke-width="0.9"/><path d="M5.2 5.2L7.4 7.4" stroke="#6c6c6c" stroke-width="1"/></svg>
<svg style="left:732px;top:493px;" width="9" height="9" viewBox="0 0 9 9"><rect x="1.4" y="1.4" width="6" height="6" rx="1" fill="none" stroke="#666" stroke-width="0.8"/><circle cx="4.4" cy="4.4" r="1.5" fill="#666"/></svg>
<svg style="left:745px;top:493px;" width="10" height="9" viewBox="0 0 10 9"><path d="M1 2.4H3.2M2.2 1.2L3.4 2.4L2.2 3.6" fill="none" stroke="#6a6a6a" stroke-width="0.7"/><rect x="3.6" y="2.2" width="5.2" height="5" rx="0.8" fill="none" stroke="#6a6a6a" stroke-width="0.8"/><rect x="5" y="3.6" width="2.4" height="2.2" fill="#6a6a6a"/></svg>
<svg style="left:760px;top:493px;" width="9" height="9" viewBox="0 0 9 9"><rect x="1.2" y="1.2" width="6.4" height="6.4" rx="0.8" fill="none" stroke="#e0e0e0" stroke-width="0.9"/><path d="M4.4 2.8V6M2.8 4.4H6" stroke="#e0e0e0" stroke-width="1"/></svg>
<svg style="left:774px;top:492.4px;" width="9" height="10" viewBox="0 0 9 10"><path d="M1.4 2.6H7.4M3.4 2.4V1.4H5.4V2.4" fill="none" stroke="#dcdcdc" stroke-width="0.9"/><path d="M2 3.4H6.8L6.3 8.6H2.5Z" fill="#dcdcdc"/><path d="M3.6 4.2V7.8M5.2 4.2V7.8" stroke="#535353" stroke-width="0.5"/></svg>
<div style="left:505px;top:167px;width:135px;height:145px;background:#535353;border:1px solid #3f3f3f;border-radius:2.5px;box-sizing:border-box;overflow:hidden;"></div>
<div style="left:506px;top:168px;width:133px;height:6.8px;background:#474747;border-radius:2px 2px 0 0;"></div>
<div style="left:506px;top:174.8px;width:133px;height:13.4px;background:#464646;"></div>
<div style="left:506px;top:174.8px;width:45.8px;height:13.6px;background:#535353;"></div>
<div style="left:551.6px;top:174.8px;width:0.8px;height:13.4px;background:#3e3e3e;"></div>
<svg style="left:622px;top:169.4px;" width="7" height="5" viewBox="0 0 7 5"><path d="M2.6 0.5L0.8 2.2L2.6 3.9ZM5.2 0.5L3.4 2.2L5.2 3.9Z" fill="#e8e8e8"/></svg>
<svg style="left:632.6px;top:168.8px;" width="6" height="6" viewBox="0 0 6 6"><path d="M1.3 1.3L4.3 4.3M4.3 1.3L1.3 4.3" stroke="#e8e8e8" stroke-width="0.9"/></svg>
<svg style="left:508px;top:179px;" width="5" height="7" viewBox="0 0 5 7"><path d="M1.2 2.6L2.4 1.4L3.6 2.6M1.2 3.8L2.4 5L3.6 3.8" fill="none" stroke="#cfcfcf" stroke-width="0.7"/></svg>
<span class="t m" style="transform:scaleX(0.751);left:514.4px;top:175.6px;font-size:6.3px;line-height:11px;color:#f2f2f2;font-weight:500;">グラデーション</span>
<svg style="left:630.4px;top:179.4px;" width="7" height="6" viewBox="0 0 7 6"><g fill="#8e8e8e"><rect x="0.4" y="0.3" width="5.4" height="1"/><rect x="0.4" y="1.7" width="5.4" height="1"/><rect x="0.4" y="3.1" width="5.4" height="1"/><rect x="0.4" y="4.5" width="5.4" height="0.9"/></g></svg>
<div style="left:509px;top:192.2px;width:17px;height:17px;background:linear-gradient(90deg,#ffe800 0%,#ffd800 30%,#f8a01c 68%,#ee5a26 100%);border:0.8px solid #2e3a4e;box-sizing:border-box;"></div>
<svg style="left:527.6px;top:198.6px;" width="4" height="3" viewBox="0 0 4 3"><path d="M0.4 0.5H3.2L1.8 2.4Z" fill="#e0e0e0"/></svg>
<svg style="left:509px;top:212.6px;" width="18" height="17" viewBox="0 0 18 17"><defs><linearGradient id="gs2" x1="0" x2="1"><stop offset="0" stop-color="#ffe600"/><stop offset="0.5" stop-color="#fbb814"/><stop offset="1" stop-color="#f0702a"/></linearGradient></defs><rect x="0.5" y="0.5" width="9.2" height="9.4" fill="#fff" stroke="#4a5a5a" stroke-width="0.4"/><path d="M0.6 9.8L9.6 0.6" stroke="#e81c1c" stroke-width="1.3"/><rect x="5.6" y="5.6" width="10.4" height="10.2" fill="url(#gs2)" stroke="#26324a" stroke-width="0.7"/><rect x="8.6" y="8.6" width="4.4" height="4.2" fill="#686868" stroke="#26324a" stroke-width="0.8"/></svg>
<svg style="left:511px;top:233.6px;" width="10" height="9" viewBox="0 0 10 9"><g fill="#e0e0e0"><rect x="0.8" y="0.8" width="3" height="3"/><rect x="0.8" y="5" width="3" height="3"/></g><g fill="none" stroke="#e0e0e0" stroke-width="0.8"><rect x="5" y="1.2" width="3.2" height="2.4"/><rect x="5" y="5.4" width="3.2" height="2.4"/><path d="M3.8 2.4H5M3.8 6.6H5"/></g></svg>
<span class="t m" style="transform:scaleX(0.995);left:542.2px;top:193.2px;font-size:7px;line-height:11px;color:#e6e6e6;">種類 :</span>
<div style="left:561.8px;top:192.2px;width:40.6px;height:13px;border:0.8px solid #5f5f5f;border-radius:1.5px;box-sizing:border-box;"></div>
<svg style="left:563.2px;top:193.2px;" width="11" height="11" viewBox="0 0 11 11"><defs><linearGradient id="g2" x1="0" x2="1"><stop offset="0" stop-color="#f5f5f5"/><stop offset="1" stop-color="#2a2a2a"/></linearGradient><radialGradient id="g3"><stop offset="0" stop-color="#f5f5f5"/><stop offset="1" stop-color="#2a2a2a"/></radialGradient></defs><rect x="0.5" y="0.5" width="9.6" height="10" rx="1" fill="#2c2c2c" stroke="#e8e8e8" stroke-width="0.9"/><rect x="2" y="2" width="6.6" height="7" fill="url(#g2)" stroke="#ddd" stroke-width="0.4"/></svg>
<svg style="left:577px;top:193.2px;" width="11" height="11" viewBox="0 0 11 11"><rect x="0.5" y="0.5" width="9.2" height="10" rx="1" fill="#4a4a4a" stroke="#6a6a6a" stroke-width="0.6"/><rect x="1.8" y="2" width="6.6" height="7" fill="url(#g3)" stroke="#ccc" stroke-width="0.4"/></svg>
<svg style="left:590.8px;top:193.2px;" width="11" height="11" viewBox="0 0 11 11"><rect x="0.5" y="0.5" width="9.2" height="10" rx="1" fill="#4e4e4e" stroke="#5f5f5f" stroke-width="0.6"/><rect x="1.8" y="2.4" width="6.6" height="6.2" fill="#666"/><path d="M2.4 7C4 4 6 7.4 8 3.6" stroke="#585858" fill="none" stroke-width="1.2"/></svg>
<span class="t m" style="transform:scaleX(0.992);left:549.2px;top:209px;font-size:7px;line-height:11px;color:#e6e6e6;">線 :</span>
<svg style="left:563.4px;top:208.8px;" width="11" height="11" viewBox="0 0 11 11"><rect x="0.5" y="0.5" width="9.4" height="9.6" rx="1" fill="#4a4a4a" stroke="#6a6a6a" stroke-width="0.8"/><path d="M3 9V3H8.4" fill="none" stroke="#f0f0f0" stroke-width="1.8"/><path d="M5 9V5H8.4" fill="none" stroke="#888" stroke-width="0.8"/></svg>
<svg style="left:575.6px;top:208.8px;" width="11" height="11" viewBox="0 0 11 11"><rect x="0.5" y="0.5" width="9.4" height="9.6" rx="1" fill="#4a4a4a" stroke="#6a6a6a" stroke-width="0.8"/><path d="M3 9V3H8.4" fill="none" stroke="#e0e0e0" stroke-width="1.6"/><path d="M4.4 9V6L5.4 4.6H8.4" fill="none" stroke="#999" stroke-width="1.2"/></svg>
<svg style="left:587.2px;top:208.8px;" width="11" height="11" viewBox="0 0 11 11"><rect x="0.5" y="0.5" width="9.4" height="9.6" rx="1" fill="#2a2a2a" stroke="#e8e8e8" stroke-width="0.8"/><path d="M3.2 9.2V3.2H8.6" fill="none" stroke="#fff" stroke-width="2.2"/></svg>
<svg style="left:552px;top:225px;" width="9" height="7" viewBox="0 0 9 7"><path d="M0.8 6H8M0.8 6L6.4 0.8" fill="none" stroke="#757575" stroke-width="0.8"/><path d="M4.4 6A3.2 3.2 0 0 0 3.4 3.6" fill="none" stroke="#757575" stroke-width="0.7"/></svg>
<div style="left:562.8px;top:222.8px;width:40px;height:10.4px;background:#4c4c4c;border-radius:1px;"></div>
<span class="t m" style="transform:scaleX(0.925);left:564.8px;top:222.6px;font-size:7px;line-height:11px;color:#707070;">0°</span>
<svg style="left:593.5px;top:225px;" width="8" height="6" viewBox="0 0 8 6"><path d="M2.2 2.1L4 3.9L5.8 2.1" fill="none" stroke="#6c6c6c" stroke-width="0.8"/></svg>
<svg style="left:551.4px;top:237.4px;" width="10" height="9" viewBox="0 0 10 9"><path d="M1 0.6V3M0.2 0.6H1.8M0.2 3H1.8M1 4.6V7.6M0.2 4.6H1.8M0.2 7.6H1.8" stroke="#757575" stroke-width="0.6"/><ellipse cx="5.8" cy="5.4" rx="3" ry="2" fill="none" stroke="#757575" stroke-width="0.8"/></svg>
<div style="left:562.8px;top:237.2px;width:40px;height:10.4px;background:#4c4c4c;border-radius:1px;"></div>
<svg style="left:593.5px;top:239.4px;" width="8" height="6" viewBox="0 0 8 6"><path d="M2.2 2.1L4 3.9L5.8 2.1" fill="none" stroke="#6c6c6c" stroke-width="0.8"/></svg>
<div style="left:513.6px;top:258px;width:105px;height:8.6px;background:linear-gradient(90deg,#ffef00 0%,#ffdf00 27%,#f9a01b 66%,#f15a24 88%,#e32222 100%);border:0.8px solid #2d3f5c;border-top-color:#39496a;border-right:none;box-sizing:border-box;"></div>
<svg style="left:520.0px;top:254px;" width="5" height="5" viewBox="0 0 5 5"><path d="M2.5 0.7L4.3 2.5L2.5 4.3L0.7 2.5Z" fill="#535353" stroke="#d8d8d8" stroke-width="0.6"/></svg>
<svg style="left:561.25px;top:254px;" width="5" height="5" viewBox="0 0 5 5"><path d="M2.5 0.7L4.3 2.5L2.5 4.3L0.7 2.5Z" fill="#535353" stroke="#d8d8d8" stroke-width="0.6"/></svg>
<svg style="left:592.5px;top:254px;" width="5" height="5" viewBox="0 0 5 5"><path d="M2.5 0.7L4.3 2.5L2.5 4.3L0.7 2.5Z" fill="#535353" stroke="#d8d8d8" stroke-width="0.6"/></svg>
<svg style="left:609.6px;top:254px;" width="5" height="5" viewBox="0 0 5 5"><path d="M2.5 0.7L4.3 2.5L2.5 4.3L0.7 2.5Z" fill="#535353" stroke="#d8d8d8" stroke-width="0.6"/></svg>
<svg style="left:510.6px;top:265.6px;" width="8" height="8" viewBox="0 0 8 8"><circle cx="4" cy="4" r="2.9" fill="#3c3c3c" stroke="#e6e6e6" stroke-width="0.7"/><circle cx="4" cy="4" r="1.75" fill="#ffee00"/></svg>
<svg style="left:539.5px;top:265.6px;" width="8" height="8" viewBox="0 0 8 8"><circle cx="4" cy="4" r="2.9" fill="#3c3c3c" stroke="#e6e6e6" stroke-width="0.7"/><circle cx="4" cy="4" r="1.75" fill="#ffdd00"/></svg>
<svg style="left:580px;top:265.6px;" width="8" height="8" viewBox="0 0 8 8"><circle cx="4" cy="4" r="2.9" fill="#3c3c3c" stroke="#e6e6e6" stroke-width="0.7"/><circle cx="4" cy="4" r="1.75" fill="#f9a01b"/></svg>
<svg style="left:602.5px;top:265.6px;" width="8" height="8" viewBox="0 0 8 8"><circle cx="4" cy="4" r="2.9" fill="#3c3c3c" stroke="#e6e6e6" stroke-width="0.7"/><circle cx="4" cy="4" r="1.75" fill="#f26a2a"/></svg>
<svg style="left:614.1px;top:265.6px;" width="8" height="8" viewBox="0 0 8 8"><circle cx="4" cy="4" r="2.9" fill="#3c3c3c" stroke="#e6e6e6" stroke-width="0.7"/><circle cx="4" cy="4" r="1.75" fill="#dd1f1f"/></svg>
<svg style="left:627px;top:260px;" width="7" height="8" viewBox="0 0 7 8"><path d="M0.8 1.8H5.6M2.2 1.6V0.8H4.2V1.6" fill="none" stroke="#6a6a6a" stroke-width="0.7"/><path d="M1.2 2.4H5.2L4.8 7H1.6Z" fill="#6a6a6a"/></svg>
<span class="t m" style="transform:scaleX(0.953);left:529.6px;top:277.8px;font-size:7px;line-height:11px;color:#777;">不透明度 :</span>
<div style="left:562.8px;top:277.6px;width:40px;height:11.4px;background:#4c4c4c;border-radius:1px;"></div>
<svg style="left:593.5px;top:280.4px;" width="8" height="6" viewBox="0 0 8 6"><path d="M2.2 2.1L4 3.9L5.8 2.1" fill="none" stroke="#6c6c6c" stroke-width="0.8"/></svg>
<svg style="left:511.6px;top:286.4px;" width="10" height="10" viewBox="0 0 10 10"><path d="M1.2 8.6L1.6 7L5.6 3L6.8 4.2L2.8 8.2Z" fill="none" stroke="#6c6c6c" stroke-width="0.8"/><path d="M5.4 2.6L7.6 0.8L9 2.2L7.2 4.4Z" fill="#6c6c6c"/></svg>
<span class="t m" style="transform:scaleX(0.961);left:542.8px;top:293px;font-size:7px;line-height:11px;color:#777;">位置 :</span>
<div style="left:562.8px;top:293px;width:40px;height:11.4px;background:#4c4c4c;border-radius:1px;"></div>
<svg style="left:593.5px;top:295.8px;" width="8" height="6" viewBox="0 0 8 6"><path d="M2.2 2.1L4 3.9L5.8 2.1" fill="none" stroke="#6c6c6c" stroke-width="0.8"/></svg>
<div style="left:506px;top:306.4px;width:133px;height:0.8px;background:#3f3f3f;"></div>
<div style="left:506px;top:307.2px;width:133px;height:3.8px;background:#484848;border-radius:0 0 2px 2px;"></div>
<div style="left:567.6px;top:308.4px;width:10.2px;height:1.2px;background:#3a3a3a;"></div>
<div style="left:5px;top:54.4px;width:14.4px;height:11.4px;background:#363636;border-radius:1.2px;"></div>
<svg style="left:5px;top:54.6px;" width="15" height="12" viewBox="0 0 15 12"><path d="M4.9 1.5V10L7.1 8.1L11 7.3Z" fill="#0e0e0e" stroke="#dcdcdc" stroke-width="0.9" stroke-linejoin="round"/></svg>
<svg style="left:5px;top:67.5px;" width="15" height="12" viewBox="0 0 15 12"><path d="M4.7 1.3V10.3L7.1 8.1L11 7.5Z" fill="#dcdcdc"/><path d="M14.7 9.1V11H12.8Z" fill="#dcdcdc"/></svg>
<svg style="left:5px;top:80.4px;" width="15" height="12" viewBox="0 0 15 12"><path d="M3.3 9.8L8.8 4.2" stroke="#dcdcdc" fill="none" stroke-width="1.3"/><path d="M9.7 1.2V2.6M5.6 3.3H7.2M10.9 4.8V6.2M10.2 5.5H11.6M6.6 1.8L7.4 2.6M11.2 2.2L10.4 3" stroke="#dcdcdc" fill="none" stroke-width="0.8"/></svg>
<svg style="left:5px;top:93.3px;" width="15" height="12" viewBox="0 0 15 12"><path d="M3 5.2C3 2.8 5 1.8 7 1.8C9.4 1.8 11 3 11 4.8C11 6 10 6.8 9 7M5.4 7C4 6.8 3 6.2 3 5.2M5.4 7C4.4 7.4 4.4 8.6 5.2 9.6" stroke="#dcdcdc" fill="none" stroke-width="1"/><path d="M6.4 4.4V10L7.8 8.8L9.6 9.2Z" fill="#dcdcdc"/></svg>
<svg style="left:5px;top:106.2px;" width="15" height="12" viewBox="0 0 15 12"><path d="M2.7 9.9L3.3 6.2Q4.6 3.6 7.3 3.3L9.5 5.5Q9.2 8.2 6.5 9.3Z" fill="#dcdcdc"/><path d="M8.1 2.6L9.5 1.1L11.8 3.4L10.3 4.8Z" fill="#dcdcdc"/><path d="M3.2 9.4L6 6.6" stroke="#535353" stroke-width="0.6"/><circle cx="6.3" cy="6.3" r="0.7" fill="#535353"/><path d="M14.7 9.1V11H12.8Z" fill="#dcdcdc"/></svg>
<svg style="left:5px;top:119.1px;" width="15" height="12" viewBox="0 0 15 12"><path d="M4.3 10.1L4.9 6.6Q6 4.2 8.5 3.9L10.5 5.9Q10.2 8.4 7.8 9.4Z" fill="#dcdcdc"/><path d="M9.2 3.2L10.5 1.8L12.6 3.9L11.2 5.3Z" fill="#dcdcdc"/><path d="M2.4 3.4C1.4 5.4 3.6 6 2.6 8C2 9.6 3.4 10.6 4.6 9.8" stroke="#dcdcdc" fill="none" stroke-width="0.8"/><circle cx="7.4" cy="6.8" r="0.7" fill="#535353"/></svg>
<svg style="left:5px;top:132.0px;" width="15" height="12" viewBox="0 0 15 12"><path d="M3.3 2H11.2V3.9H10.5L10.2 2.9H7.9V8.8L9.2 9.1V9.7H5.3V9.1L6.6 8.8V2.9H4.3L4 3.9H3.3Z" fill="#dcdcdc"/><path d="M14.7 9.1V11H12.8Z" fill="#dcdcdc"/></svg>
<svg style="left:5px;top:144.9px;" width="15" height="12" viewBox="0 0 15 12"><g transform="translate(14.6,0.2) scale(-1,1)"><path d="M11.6 4.2C10.6 2 7.6 1.4 5.6 2.6C3.4 4 3.2 7 4.8 8.6C6.4 10.2 9.2 9.6 9.8 7.6C10.2 6 9 4.6 7.6 4.8C6.4 5 6 6.4 6.8 7.2" stroke="#dcdcdc" fill="none" stroke-width="0.9"/></g><path d="M14.7 9.1V11H12.8Z" fill="#dcdcdc"/></svg>
<svg style="left:5px;top:157.8px;" width="15" height="12" viewBox="0 0 15 12"><rect x="3.2" y="2.2" width="8.4" height="7.4" rx="0.6" stroke="#dcdcdc" fill="none" stroke-width="0.9"/><rect x="4" y="3" width="6.8" height="5.8" fill="#787878"/><path d="M14.7 9.1V11H12.8Z" fill="#dcdcdc"/></svg>
<svg style="left:5px;top:170.7px;" width="15" height="12" viewBox="0 0 15 12"><path d="M6 6.6L10.6 1.2L11.8 2.2L7.2 7.8Z" fill="#dcdcdc"/><path d="M5.4 7.2L6.6 8.4C6.4 10 4.4 10.8 2.4 10.4C3.6 9.6 3.4 7.6 5.4 7.2Z" fill="#dcdcdc"/><path d="M14.7 9.1V11H12.8Z" fill="#dcdcdc"/></svg>
<svg style="left:5px;top:183.6px;" width="15" height="12" viewBox="0 0 15 12"><circle cx="5" cy="4.9" r="2.7" stroke="#dcdcdc" fill="none" stroke-width="0.9"/><path d="M6.2 9.4L12.6 2.8" stroke="#dcdcdc" fill="none" stroke-width="1.4"/><path d="M14.7 9.1V11H12.8Z" fill="#dcdcdc"/></svg>
<svg style="left:5px;top:196.5px;" width="15" height="12" viewBox="0 0 15 12"><path d="M3 6.6L7.6 1.8L11.6 5.2L7 10L4.6 9.6Z" fill="#dcdcdc"/><path d="M4.2 5.4L8.2 8.8" stroke="#535353" stroke-width="0.7"/><path d="M14.7 9.1V11H12.8Z" fill="#dcdcdc"/></svg>
<svg style="left:5px;top:209.4px;" width="15" height="12" viewBox="0 0 15 12"><path d="M4.9 3A3.9 3.9 0 1 1 4.4 8" stroke="#dcdcdc" fill="none" stroke-width="0.9"/><path d="M3 1.6L6.2 2.2L4 4.8Z" fill="#dcdcdc"/><path d="M14.7 9.1V11H12.8Z" fill="#dcdcdc"/></svg>
<svg style="left:5px;top:222.3px;" width="15" height="12" viewBox="0 0 15 12"><rect x="5.4" y="1.4" width="6.6" height="6.2" rx="0.8" stroke="#bdbdbd" fill="none" stroke-width="0.9"/><rect x="2.6" y="5.6" width="5.4" height="4.4" rx="0.8" fill="#535353" stroke="#bdbdbd" stroke-width="0.9"/><path d="M5 7.8L10 3.4M8 3.2H10.2V5.2" stroke="#dcdcdc" fill="none" stroke-width="0.8"/><path d="M14.7 9.1V11H12.8Z" fill="#dcdcdc"/></svg>
<svg style="left:5px;top:235.2px;" width="15" height="12" viewBox="0 0 15 12"><path d="M2.6 9.6C4.4 8.6 4.6 6.6 6.6 7C8.6 7.4 9 5 11.8 4.4" stroke="#dcdcdc" fill="none" stroke-width="1.5"/><path d="M4.2 2.2C5.6 2.4 6.4 3.6 6.2 5.4" stroke="#dcdcdc" fill="none" stroke-width="1.2"/><circle cx="3.2" cy="9.4" r="1" fill="#dcdcdc"/><circle cx="11.6" cy="4.6" r="0.9" fill="#dcdcdc"/><path d="M14.7 9.1V11H12.8Z" fill="#dcdcdc"/></svg>
<svg style="left:5px;top:248.1px;" width="15" height="12" viewBox="0 0 15 12"><rect x="4.4" y="2.4" width="7" height="7.2" stroke="#dcdcdc" fill="none" stroke-width="0.8" stroke-dasharray="1.4 0.9"/><path d="M1.6 2.6V9L3.4 7.4L6.4 7.6Z" fill="#dcdcdc"/><rect x="10.4" y="1.4" width="2" height="2" fill="#dcdcdc"/><rect x="10.4" y="8.6" width="2" height="2" fill="#dcdcdc"/><path d="M14.7 9.1V11H12.8Z" fill="#dcdcdc"/></svg>
<svg style="left:5px;top:261.0px;" width="15" height="12" viewBox="0 0 15 12"><circle cx="5" cy="4.6" r="2.8" stroke="#dcdcdc" fill="none" stroke-width="0.9"/><circle cx="8" cy="5.6" r="2.8" stroke="#dcdcdc" fill="none" stroke-width="0.9"/><path d="M7 5.4V11L8.6 9.6L10.8 10Z" fill="#dcdcdc" stroke="#535353" stroke-width="0.3"/><path d="M14.7 9.1V11H12.8Z" fill="#dcdcdc"/></svg>
<svg style="left:5px;top:273.9px;" width="15" height="12" viewBox="0 0 15 12"><path d="M2.6 1.4V9.9H12L2.6 1.4M2.6 4.2L12 9.9M2.6 7L12 9.9M5 3.6V9.9M7.4 5.8V9.9" stroke="#dcdcdc" fill="none" stroke-width="0.8"/><path d="M14.7 9.1V11H12.8Z" fill="#dcdcdc"/></svg>
<svg style="left:5px;top:286.8px;" width="15" height="12" viewBox="0 0 15 12"><rect x="3.2" y="1.9" width="8.2" height="7" stroke="#dcdcdc" fill="none" stroke-width="0.8" stroke-dasharray="1.6 0.6"/><path d="M3.2 5.4C5.4 4.2 8.6 6.8 11.4 5.4M7.2 1.9C6.2 4.2 8.4 6.6 7.2 8.9" stroke="#dcdcdc" fill="none" stroke-width="0.8"/><circle cx="7.2" cy="5.4" r="0.9" fill="#dcdcdc"/></svg>
<svg style="left:5px;top:299.7px;" width="15" height="12" viewBox="0 0 15 12"><defs><linearGradient id="gt" x1="0" x2="1"><stop offset="0.1" stop-color="#0c0c0c"/><stop offset="1" stop-color="#e8e8e8"/></linearGradient></defs><rect x="3.2" y="1.8" width="8.4" height="7.4" rx="0.8" fill="url(#gt)" stroke="#c8c8c8" stroke-width="0.8"/></svg>
<svg style="left:5px;top:312.6px;" width="15" height="12" viewBox="0 0 15 12"><path d="M2.4 10.6L2.8 8.6L7 4.4L8.6 6L4.4 10.2Z" stroke="#dcdcdc" fill="none" stroke-width="0.8"/><path d="M6.8 3.6L9.6 1L11.8 3.2L9.4 6.2Z" fill="#dcdcdc"/><path d="M14.7 9.1V11H12.8Z" fill="#dcdcdc"/></svg>
<svg style="left:5px;top:325.5px;" width="15" height="12" viewBox="0 0 15 12"><rect x="2" y="2" width="4.4" height="4.4" fill="#dcdcdc"/><circle cx="9.4" cy="7.6" r="2.6" stroke="#dcdcdc" fill="none" stroke-width="0.9"/><path d="M5.4 5.4L8 7" stroke="#dcdcdc" fill="none" stroke-width="0.8"/></svg>
<svg style="left:5px;top:338.4px;" width="15" height="12" viewBox="0 0 15 12"><rect x="5.6" y="4.6" width="5.6" height="6" rx="1.2" stroke="#dcdcdc" fill="none" stroke-width="0.9"/><path d="M7 4.6V2.8H9.8V4.6" stroke="#dcdcdc" fill="none" stroke-width="0.8"/><circle cx="8.4" cy="7.6" r="1.4" stroke="#dcdcdc" fill="none" stroke-width="0.7"/><path d="M1.8 2H3M1.8 2V3.2M4.4 2.6V3.4M2.6 5V5.8" stroke="#dcdcdc" fill="none" stroke-width="0.7"/><path d="M14.7 9.1V11H12.8Z" fill="#dcdcdc"/></svg>
<svg style="left:5px;top:351.3px;" width="15" height="12" viewBox="0 0 15 12"><path d="M2.8 1.6V9.4H12" stroke="#dcdcdc" fill="none" stroke-width="0.9"/><rect x="4.4" y="5.6" width="1.3" height="3.6" fill="#dcdcdc"/><rect x="6.6" y="3.2" width="1.3" height="6" fill="#dcdcdc"/><rect x="8.8" y="1.8" width="1.3" height="7.4" fill="#dcdcdc"/><rect x="10.8" y="3.8" width="1.2" height="5.4" fill="#dcdcdc"/><path d="M14.7 9.1V11H12.8Z" fill="#dcdcdc"/></svg>
<svg style="left:5px;top:364.2px;" width="15" height="12" viewBox="0 0 15 12"><path d="M4.6 1.4V4M3 2.8H6" stroke="#dcdcdc" fill="none" stroke-width="0.8"/><path d="M4.6 3.6H9.6L11.8 5.6V9.4H4.6Z" stroke="#dcdcdc" fill="none" stroke-width="0.9"/><path d="M6.4 5.4H9.8V7.6H6.4Z" stroke="#dcdcdc" fill="none" stroke-width="0.6"/></svg>
<svg style="left:5px;top:377.1px;" width="15" height="12" viewBox="0 0 15 12"><path d="M2.6 10.4L3.4 7.8L9.6 1.8L11.4 3.6L5.4 9.6Z" fill="#dcdcdc"/><path d="M4.2 7.2L6 9" stroke="#535353" stroke-width="0.6"/><path d="M14.7 9.1V11H12.8Z" fill="#dcdcdc"/></svg>
<svg style="left:5px;top:390.0px;" width="15" height="12" viewBox="0 0 15 12"><path d="M5.6 6V3M7.2 6V2.2M8.8 6V2.6M10.3 6.4V3.8" stroke="#dcdcdc" fill="none" stroke-width="1.1" stroke-linecap="round"/><path d="M5 5.6H10.9V7.2C10.9 8.8 10 9.8 8.4 9.8H7.6C6.4 9.8 5.8 9.4 5 8.4L3.2 6.2C2.8 5.4 3.8 5 4.4 5.6L5 6.4Z" fill="#dcdcdc"/><path d="M14.7 9.1V11H12.8Z" fill="#dcdcdc"/></svg>
<svg style="left:5px;top:402.9px;" width="15" height="12" viewBox="0 0 15 12"><circle cx="6.1" cy="4.8" r="2.9" stroke="#dcdcdc" fill="none" stroke-width="1"/><path d="M8.3 7L11.4 10.2" stroke="#dcdcdc" fill="none" stroke-width="1.4"/></svg>
<svg style="left:4px;top:417.6px;" width="8" height="8" viewBox="0 0 8 8"><rect x="0.6" y="0.6" width="3.6" height="3.6" fill="#fff" stroke="#222" stroke-width="0.4"/><rect x="2.4" y="2.4" width="3.6" height="3.6" fill="#fff" stroke="#111" stroke-width="1.2"/><rect x="3.4" y="3.4" width="1.6" height="1.6" fill="#535353"/></svg>
<svg style="left:14.4px;top:417.8px;" width="8" height="9" viewBox="0 0 8 9"><path d="M1.6 2.4H4A1.8 1.8 0 0 1 5.8 4.2V7" stroke="#dcdcdc" fill="none" stroke-width="0.9"/><path d="M3 0.8L1 2.4L3 4Z" fill="#dcdcdc"/><path d="M4.2 5.8L5.8 7.8L7.4 5.8Z" fill="#dcdcdc"/></svg>
<svg style="left:4.4px;top:427.8px;" width="17" height="17" viewBox="0 0 17 17"><defs><linearGradient id="gs" x1="0" x2="1"><stop offset="0" stop-color="#ffe600"/><stop offset="0.5" stop-color="#fbb814"/><stop offset="1" stop-color="#f0702a"/></linearGradient></defs><rect x="0.6" y="0.6" width="9.6" height="10.4" fill="#fff" stroke="#4a6a6a" stroke-width="0.4"/><path d="M0.6 11L10.4 0.6" stroke="#e81c1c" stroke-width="1.3"/><rect x="5.3" y="6.1" width="10" height="9.8" fill="url(#gs)" stroke="#26324a" stroke-width="0.7"/><rect x="8.7" y="9.5" width="3.8" height="3.4" fill="#6a6a6a" stroke="#26324a" stroke-width="0.8"/></svg>
<svg style="left:4.6px;top:447.6px;" width="17" height="6" viewBox="0 0 17 6"><rect x="0.4" y="0.4" width="4.6" height="4.6" fill="#111"/><rect x="1.8" y="1.8" width="1.6" height="1.6" fill="#ddd"/><defs><linearGradient id="gm" x1="0" x2="1"><stop offset="0" stop-color="#ffe600"/><stop offset="1" stop-color="#f08a1c"/></linearGradient></defs><rect x="5.6" y="0.4" width="4.6" height="4.6" fill="url(#gm)"/><rect x="10.8" y="0.4" width="4.6" height="4.6" fill="#fff"/><path d="M11 4.8L15.2 0.6" stroke="#e81c1c" stroke-width="1.1"/></svg>
<svg style="left:8px;top:456.4px;" width="9" height="9" viewBox="0 0 9 9"><circle cx="3.6" cy="3.6" r="2.4" fill="#cfcfcf"/><rect x="3.6" y="3.8" width="4" height="3.8" fill="#8a8a8a" stroke="#cfcfcf" stroke-width="0.6"/></svg>
<svg style="left:6.4px;top:469px;" width="12" height="10" viewBox="0 0 12 10"><rect x="3.6" y="0.8" width="7.4" height="5.4" stroke="#dcdcdc" fill="none" stroke-width="0.9"/><rect x="0.8" y="3.4" width="7" height="5.2" fill="#535353" stroke="#dcdcdc" stroke-width="0.9"/><rect x="2.4" y="5" width="3.8" height="2.2" fill="#dcdcdc"/></svg>
<div style="left:8.3px;top:489.8px;width:2px;height:2px;background:#e4e4e4;border-radius:50%;"></div>
<div style="left:11.200000000000001px;top:489.8px;width:2px;height:2px;background:#e4e4e4;border-radius:50%;"></div>
<div style="left:14.100000000000001px;top:489.8px;width:2px;height:2px;background:#e4e4e4;border-radius:50%;"></div>
<div style="left:0px;top:0px;width:1.4px;height:505px;background:#3e3e3e;"></div>
<div style="left:0px;top:502.8px;width:800px;height:2.2px;background:#3e3e3e;"></div>
<div style="left:798.8px;top:0px;width:1.2px;height:505px;background:#474747;"></div>
<div style="left:0px;top:0px;width:1.6px;height:1.6px;background:#27a8d8;"></div>
</body></html>
